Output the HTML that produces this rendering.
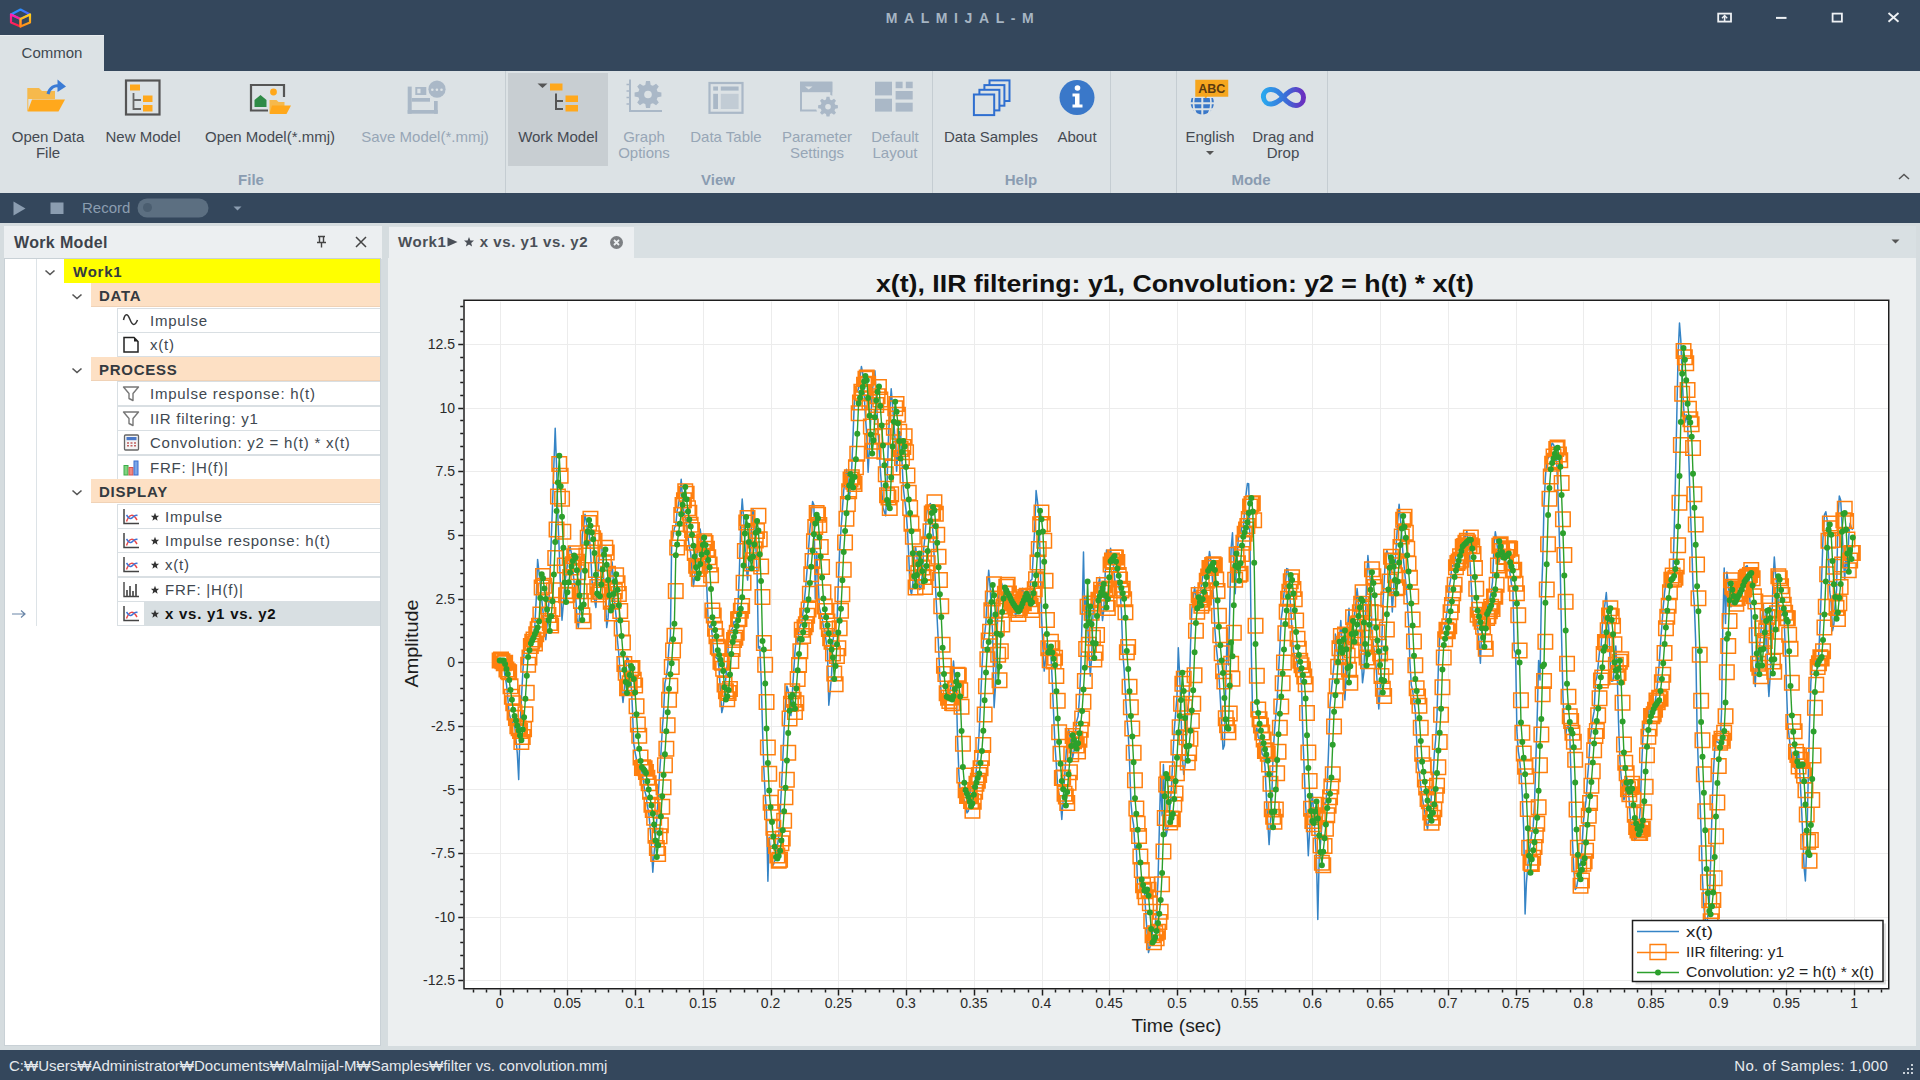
<!DOCTYPE html>
<html><head><meta charset="utf-8">
<style>
*{margin:0;padding:0;box-sizing:border-box}
html,body{width:1920px;height:1080px;overflow:hidden;background:#34475c;font-family:"Liberation Sans",sans-serif;}
.a{position:absolute}
#ttl{left:0;width:1920px;top:10px;text-align:center;color:#a6b5c3;font-weight:bold;font-size:14px;letter-spacing:6.6px;text-indent:6px;line-height:16px}
#ctab{left:0;top:35px;width:104px;height:36px;background:#dce2e5;border-top:1px solid #e9edef;color:#404850;font-size:15px;text-align:center;line-height:34px}
#ribbon{left:0;top:71px;width:1920px;height:122px;background:#dce2e5}
.lb{position:absolute;top:129px;font-size:15px;line-height:16px;color:#454a52;text-align:center;white-space:nowrap}
.dis{color:#97a6b6}
.grp{position:absolute;top:172px;font-size:15px;font-weight:bold;color:#8a9cb1;text-align:center;line-height:16px}
.sep{position:absolute;top:71px;width:1px;height:122px;background:#c5cdd2}
#lpanel{left:0;top:223px;width:387px;height:827px;background:#d5dcdf}
#lhead{left:4px;top:226px;width:378px;height:33px;background:#eceff1}
#tree{left:4px;top:258px;width:377px;height:788px;background:#fff;border:1px solid #c9d1d6}
.row{position:absolute;height:25px;font-size:15px;line-height:26px;color:#404850;white-space:nowrap;letter-spacing:0.75px}
.cell{position:absolute;left:117px;width:263px;height:25px;border:1px solid #d9dfe3;border-right:none;background:#fff}
.ic{position:absolute}
#rpanel{left:387px;top:223px;width:1533px;height:827px;background:#d5dcdf}
#tabstrip{left:389px;top:226px;width:1527px;height:33px;background:#d9e0e3}
#doctab{left:389px;top:227px;width:245px;height:32px;background:#eceff1}
#content{left:388px;top:258px;width:1528px;height:788px;background:#eceff0}
#status{left:0;top:1050px;width:1920px;height:30px;background:#34475c;color:#e6eaee;font-size:15px;line-height:32px}
</style></head><body>
<!-- title bar -->
<svg class="a" style="left:8px;top:6px" width="26" height="24" viewBox="0 0 26 24">
<defs><linearGradient id="cg1" x1="0" y1="0" x2="1" y2="1"><stop offset="0" stop-color="#1aa6ff"/><stop offset="1" stop-color="#6a3cff"/></linearGradient>
<linearGradient id="cg2" x1="0" y1="0" x2="0" y2="1"><stop offset="0" stop-color="#ff1fb4"/><stop offset="1" stop-color="#ff2040"/></linearGradient>
<linearGradient id="cg3" x1="0" y1="0" x2="0" y2="1"><stop offset="0" stop-color="#ffd21a"/><stop offset="1" stop-color="#ff8a1a"/></linearGradient></defs>
<path d="M3 8.5L12.5 3.5L22 8.5L12.5 13Z" fill="none" stroke="url(#cg1)" stroke-width="2.2" stroke-linejoin="round"/>
<path d="M3 8.5V16.5L12.5 20.5V13Z" fill="none" stroke="url(#cg2)" stroke-width="2.2" stroke-linejoin="round"/>
<path d="M22 8.5V16.5L12.5 20.5V13Z" fill="none" stroke="url(#cg3)" stroke-width="2.2" stroke-linejoin="round"/>
</svg>
<div id="ttl" class="a">MALMIJAL-M</div>
<svg class="a" style="left:1700px;top:0" width="220" height="35" viewBox="1700 0 220 35" fill="none" stroke="#eef1f4" stroke-width="1.8">
<rect x="1718.2" y="13.6" width="12.8" height="8"/><path d="M1724.6 21V16.2" stroke-width="1.6"/><path d="M1722 18.2L1724.6 15.6L1727.2 18.2" stroke-width="1.4"/>
<path d="M1776 17.9H1786.5" stroke-width="2"/>
<rect x="1832.6" y="13.6" width="9.3" height="8"/>
<path d="M1888.5 13L1898.5 21.8M1898.5 13L1888.5 21.8" stroke-width="1.9"/>
</svg>
<div id="ctab" class="a">Common</div>
<!-- ribbon -->
<div id="ribbon" class="a"></div>
<div class="a" style="left:508px;top:73px;width:100px;height:93px;background:#c8ced2"></div>
<div class="sep" style="left:505px"></div>
<div class="sep" style="left:932px"></div>
<div class="sep" style="left:1110px"></div>
<div class="sep" style="left:1176px"></div>
<div class="sep" style="left:1327px"></div>
<!-- ribbon icons -->
<svg class="a" style="left:0;top:71px" width="1340" height="122" viewBox="0 71 1340 122">
<!-- open data file -->
<path d="M28 88h11l3 3h13v8H28z" fill="#f6b94c"/>
<path d="M32 99.5H65L58.5 111.5H27.5z" fill="#ffa81c"/>
<path d="M27.8 88v23" stroke="#f6b94c" stroke-width="1"/>
<path d="M48 94C50 87 55 85 59 86" fill="none" stroke="#3a7bd5" stroke-width="3.2"/>
<path d="M57.5 79.5L66 86.5L57.5 92z" fill="#3a7bd5"/>
<!-- new model -->
<rect x="126" y="80.5" width="33.5" height="34" fill="none" stroke="#555" stroke-width="2.2"/>
<rect x="130" y="84.5" width="10" height="6" fill="#ffa81c"/>
<path d="M133.5 93v16H141M133.5 100H141" fill="none" stroke="#666" stroke-width="1.8"/>
<rect x="143" y="95.5" width="9.5" height="6.5" fill="#ffa81c"/>
<rect x="143" y="105" width="9.5" height="6.5" fill="#ffa81c"/>
<!-- open model -->
<path d="M268 110.5H251V85H284V97" fill="none" stroke="#555" stroke-width="2.2"/>
<path d="M254.5 107V100L260.5 95L266.5 100V107z" fill="#2e8b46"/>
<circle cx="273.5" cy="92" r="3.4" fill="#ffa81c"/>
<path d="M269.5 100h7l2 2h6v11h-15z" fill="#f6b94c"/>
<path d="M272 105.5H291L286.5 114H269.5z" fill="#ffa81c"/>
<!-- save model disabled -->
<g fill="#aab8c7">
<rect x="407.7" y="86.6" width="4" height="27.1"/>
<rect x="407.7" y="110" width="30" height="3.7"/>
<rect x="434" y="101" width="3.7" height="12.7"/>
<rect x="411.7" y="98" width="18.3" height="3.7"/>
<path d="M415.3 87h11v8h-11zM417.3 88.7v4.6h3.2v-4.6z" fill-rule="evenodd"/>
</g>
<circle cx="437" cy="89.2" r="9.8" fill="#dce2e5"/>
<circle cx="437" cy="89.2" r="8.6" fill="#aab8c7"/>
<circle cx="432.3" cy="89.7" r="1.3" fill="#dce2e5"/><circle cx="436.9" cy="89.7" r="1.3" fill="#dce2e5"/><circle cx="441.5" cy="89.7" r="1.3" fill="#dce2e5"/>
<!-- work model -->
<path d="M537.5 83.5H547.5L542.5 88z" fill="#555"/>
<rect x="550" y="83.5" width="12.5" height="7" fill="#ffa81c"/>
<path d="M556 93.5v15.5H563M556 101H563" fill="none" stroke="#555" stroke-width="2"/>
<rect x="565.5" y="95.5" width="12.5" height="6.5" fill="#ffa81c"/>
<rect x="565.5" y="105" width="12.5" height="6.5" fill="#ffa81c"/>
<!-- graph options -->
<path d="M630 79.5v31.6h32" fill="none" stroke="#aab8c7" stroke-width="2"/>
<path d="M626.5 84.5h3.5M626.5 91h3.5M626.5 97.5h3.5M626.5 104h3.5" stroke="#aab8c7" stroke-width="1.6"/>
<path d="M657.6 91.8L661.4 92.5L661.4 96.5L657.6 97.2L656.7 99.4L658.8 102.6L656.1 105.3L652.9 103.2L650.7 104.1L650.0 107.9L646.0 107.9L645.3 104.1L643.1 103.2L639.9 105.3L637.2 102.6L639.3 99.4L638.4 97.2L634.6 96.5L634.6 92.5L638.4 91.8L639.3 89.6L637.2 86.4L639.9 83.7L643.1 85.8L645.3 84.9L646.0 81.1L650.0 81.1L650.7 84.9L652.9 85.8L656.1 83.7L658.8 86.4L656.7 89.6z" fill="#aab8c7"/>
<circle cx="648" cy="94.5" r="3.8" fill="#dce2e5"/>
<!-- data table -->
<rect x="709.5" y="83" width="33" height="29.8" fill="none" stroke="#aab8c7" stroke-width="2.2"/>
<rect x="713.2" y="86.5" width="4.8" height="4.1" fill="#aab8c7"/>
<rect x="720.8" y="86.5" width="17.8" height="4.1" fill="#aab8c7"/>
<rect x="713.2" y="93.8" width="4.8" height="15.2" fill="#aab8c7"/>
<rect x="720.8" y="93.8" width="17.8" height="15.2" fill="#c2ccd5"/>
<!-- parameter settings -->
<path d="M819 110.6H801V82.7H831.3V97" fill="none" stroke="#aab8c7" stroke-width="2"/>
<rect x="800" y="81.7" width="32.3" height="10.5" fill="#aab8c7"/>
<path d="M805 86.5h7.5l-3.75 3z" fill="#dce2e5"/>
<circle cx="828" cy="106.7" r="12" fill="#dce2e5"/>
<path d="M835.2 104.7L837.9 105.2L837.9 108.2L835.2 108.7L834.5 110.4L836.0 112.7L834.0 114.7L831.7 113.2L830.0 113.9L829.5 116.6L826.5 116.6L826.0 113.9L824.3 113.2L822.0 114.7L820.0 112.7L821.5 110.4L820.8 108.7L818.1 108.2L818.1 105.2L820.8 104.7L821.5 103.0L820.0 100.7L822.0 98.7L824.3 100.2L826.0 99.5L826.5 96.8L829.5 96.8L830.0 99.5L831.7 100.2L834.0 98.7L836.0 100.7L834.5 103.0z" fill="#aab8c7"/>
<circle cx="828" cy="106.7" r="2.8" fill="#dce2e5"/>
<!-- default layout -->
<rect x="875" y="81.7" width="17" height="13.7" fill="#aab8c7"/>
<rect x="875" y="98.7" width="17" height="12.9" fill="#aab8c7"/>
<rect x="895.6" y="81.7" width="7" height="6.5" fill="#aab8c7"/>
<rect x="905.8" y="81.7" width="6.9" height="6.5" fill="#aab8c7"/>
<rect x="895.6" y="91" width="17.1" height="8.5" fill="#aab8c7"/>
<rect x="895.6" y="102.7" width="17.1" height="8.9" fill="#aab8c7"/>
<!-- data samples -->
<g fill="#dce2e5" stroke="#2f6fd0" stroke-width="2">
<rect x="989.5" y="80.4" width="20" height="20.6"/>
<rect x="984.4" y="85.1" width="20" height="20.6"/>
<rect x="979.4" y="89.8" width="20" height="20.6"/>
<rect x="973.9" y="94.5" width="20.3" height="20.6"/>
</g>
<!-- about -->
<circle cx="1077" cy="97.5" r="17.5" fill="#3a78c9"/>
<circle cx="1077.5" cy="88" r="2.8" fill="#fff"/>
<path d="M1072.5 93.5h7v11h3v3h-10v-3h2.5v-8h-2.5z" fill="#fff"/>
<!-- english -->
<path d="M1194.5 79h34.5v18.5h-21.5l-3.5 5v-5h-9.5z" fill="#f6a61e" stroke="#dce2e5" stroke-width="1.5"/>
<text x="1211.7" y="93" font-family="Liberation Sans" font-weight="bold" font-size="12.5" fill="#5a3a10" text-anchor="middle">ABC</text>
<clipPath id="glc"><rect x="1188" y="98" width="30" height="20"/></clipPath>
<g clip-path="url(#glc)"><circle cx="1202.3" cy="102.8" r="11.6" fill="#3a78c9"/>
<path d="M1189 103.3h27M1189 109.3h27M1202.3 96v20" stroke="#dce2e5" stroke-width="2"/>
<path d="M1196.5 92c-4 6-4 16 0 23M1208 92c4 6 4 16 0 23" fill="none" stroke="#dce2e5" stroke-width="1.6"/></g>
<!-- drag and drop -->
<defs><linearGradient id="inf" x1="0" x2="1"><stop offset="0" stop-color="#2aa7ee"/><stop offset="0.55" stop-color="#3a6fd8"/><stop offset="1" stop-color="#6a2fc0"/></linearGradient></defs>
<path d="M1283 97.5C1279 91 1275 89 1270 89.5C1265 90 1263 94 1263.5 97.5C1264 101.5 1267 104.5 1271.5 104C1276 103.5 1279 101 1283 97.5C1287 93 1291 89 1296 89.5C1301 90 1303.5 94 1303.5 97.5C1303.5 102 1300.5 105.5 1296 105.5C1291 105.5 1287 102 1283 97.5z" fill="none" stroke="url(#inf)" stroke-width="5"/>
</svg>
<!-- ribbon labels -->
<div class="lb" style="left:8px;width:80px">Open Data<br>File</div>
<div class="lb" style="left:100px;width:86px">New Model</div>
<div class="lb" style="left:195px;width:150px">Open Model(*.mmj)</div>
<div class="lb dis" style="left:350px;width:150px">Save Model(*.mmj)</div>
<div class="lb" style="left:510px;width:96px">Work Model</div>
<div class="lb dis" style="left:610px;width:68px">Graph<br>Options</div>
<div class="lb dis" style="left:684px;width:84px">Data Table</div>
<div class="lb dis" style="left:774px;width:86px">Parameter<br>Settings</div>
<div class="lb dis" style="left:862px;width:66px">Default<br>Layout</div>
<div class="lb" style="left:940px;width:102px">Data Samples</div>
<div class="lb" style="left:1047px;width:60px">About</div>
<div class="lb" style="left:1180px;width:60px">English</div>
<svg class="a" style="left:1205px;top:150px" width="10" height="6"><path d="M1 1h8l-4 4z" fill="#555"/></svg>
<div class="lb" style="left:1244px;width:78px">Drag and<br>Drop</div>
<div class="grp" style="left:211px;width:80px">File</div>
<div class="grp" style="left:678px;width:80px">View</div>
<div class="grp" style="left:981px;width:80px">Help</div>
<div class="grp" style="left:1211px;width:80px">Mode</div>
<svg class="a" style="left:1897px;top:172px" width="14" height="10"><path d="M2 7L7 2.5L12 7" fill="none" stroke="#555" stroke-width="1.5"/></svg>
<!-- toolbar -->
<svg class="a" style="left:0;top:193px" width="260" height="30" viewBox="0 193 260 30">
<path d="M13.5 201.5L25.5 208.5L13.5 215.5z" fill="#8b9db0"/>
<rect x="50.5" y="202.5" width="13" height="11.5" fill="#8b9db0"/>
<rect x="137.5" y="198.5" width="71" height="19" rx="9.5" fill="#5c6f81"/>
<circle cx="147.5" cy="207.5" r="4.5" fill="#4b5e70"/>
<path d="M233.5 206.5h8l-4 4z" fill="#8b9db0"/>
</svg>
<div class="a" style="left:82px;top:199px;font-size:15px;line-height:18px;color:#8b9db0">Record</div>
<!-- left panel -->
<div id="lpanel" class="a"></div>
<div id="lhead" class="a"></div>
<div class="a" style="left:14px;top:234px;font-size:16px;font-weight:bold;color:#3d434b;line-height:18px;letter-spacing:0.35px">Work Model</div>
<svg class="a" style="left:310px;top:230px" width="64" height="24" viewBox="310 230 64 24">
<path d="M318 236.5h7M319.5 236.5v6M323.5 236.5v6M317 242.5h9M321.5 242.5v5" fill="none" stroke="#444" stroke-width="1.4"/>
<path d="M356 237l10 10M366 237l-10 10" stroke="#444" stroke-width="1.5"/>
</svg>
<div id="tree" class="a"></div>
<div class="a" style="left:36px;top:259px;width:1px;height:367px;background:#dde3e7"></div>
<div class="a" style="left:64px;top:259px;width:316px;height:24px;background:#ffff00"></div>
<svg class="a" style="left:44px;top:269px" width="12" height="7"><path d="M1.5 1.5L6 5.5L10.5 1.5" fill="none" stroke="#555" stroke-width="1.6"/></svg>
<div class="row" style="left:73px;top:259px;font-weight:bold;color:#343a40">Work1</div>
<div class="a" style="left:91px;top:283px;width:289px;height:24px;background:#fde0c4;border-bottom:1px solid #f0d2b6"></div>
<svg class="a" style="left:71px;top:293px" width="12" height="7"><path d="M1.5 1.5L6 5.5L10.5 1.5" fill="none" stroke="#555" stroke-width="1.6"/></svg>
<div class="row" style="left:99px;top:283px;font-weight:bold;color:#343a40">DATA</div>
<div class="cell" style="top:308px"></div>
<svg class="ic" style="left:121px;top:311px" width="20" height="19" viewBox="0 0 19 19"><path d="M2 9C3.5 2 6 2 8.5 8.5S13.5 15 16 9" fill="none" stroke="#333" stroke-width="1.5"/></svg>
<div class="row" style="left:150px;top:308px;">Impulse</div>
<div class="cell" style="top:332px"></div>
<svg class="ic" style="left:121px;top:335px" width="20" height="19" viewBox="0 0 19 19"><path d="M2.5 2.5h10l4 4v10.5h-14z" fill="none" stroke="#222" stroke-width="1.5"/><path d="M12.5 2.5l4 4h-4z" fill="#222"/></svg>
<div class="row" style="left:150px;top:332px;">x(t)</div>
<div class="a" style="left:91px;top:357px;width:289px;height:24px;background:#fde0c4;border-bottom:1px solid #f0d2b6"></div>
<svg class="a" style="left:71px;top:367px" width="12" height="7"><path d="M1.5 1.5L6 5.5L10.5 1.5" fill="none" stroke="#555" stroke-width="1.6"/></svg>
<div class="row" style="left:99px;top:357px;font-weight:bold;color:#343a40">PROCESS</div>
<div class="cell" style="top:381px"></div>
<svg class="ic" style="left:121px;top:384px" width="20" height="19" viewBox="0 0 19 19"><path d="M2 3h15l-5.5 6.5v7l-4-2v-5z" fill="none" stroke="#777" stroke-width="1.4" stroke-linejoin="round"/></svg>
<div class="row" style="left:150px;top:381px;">Impulse response: h(t)</div>
<div class="cell" style="top:406px"></div>
<svg class="ic" style="left:121px;top:409px" width="20" height="19" viewBox="0 0 19 19"><path d="M2 3h15l-5.5 6.5v7l-4-2v-5z" fill="none" stroke="#777" stroke-width="1.4" stroke-linejoin="round"/></svg>
<div class="row" style="left:150px;top:406px;">IIR filtering: y1</div>
<div class="cell" style="top:430px"></div>
<svg class="ic" style="left:121px;top:433px" width="20" height="19" viewBox="0 0 19 19"><rect x="3" y="2" width="14" height="15" rx="1" fill="#f4f4f4" stroke="#666" stroke-width="1.3"/><rect x="5" y="4" width="10" height="3.2" fill="#4a78c8"/><path d="M5.5 10h2M9 10h2M12.5 10h2M5.5 12.8h2M9 12.8h2M12.5 12.8h2" stroke="#c06060" stroke-width="1.4"/></svg>
<div class="row" style="left:150px;top:430px;">Convolution: y2 = h(t) * x(t)</div>
<div class="cell" style="top:455px"></div>
<svg class="ic" style="left:121px;top:458px" width="20" height="19" viewBox="0 0 19 19"><rect x="2.5" y="7.5" width="4" height="9.5" fill="#7fd27f" stroke="#3cae4a"/><rect x="7.5" y="9.5" width="4" height="7.5" fill="#f08a80" stroke="#d9534f"/><rect x="12.5" y="3" width="4" height="14" fill="#7aa6e8" stroke="#3a6fd0"/></svg>
<div class="row" style="left:150px;top:455px;">FRF: |H(f)|</div>
<div class="a" style="left:91px;top:479px;width:289px;height:24px;background:#fde0c4;border-bottom:1px solid #f0d2b6"></div>
<svg class="a" style="left:71px;top:489px" width="12" height="7"><path d="M1.5 1.5L6 5.5L10.5 1.5" fill="none" stroke="#555" stroke-width="1.6"/></svg>
<div class="row" style="left:99px;top:479px;font-weight:bold;color:#343a40">DISPLAY</div>
<div class="cell" style="top:504px"></div>
<svg class="ic" style="left:121px;top:507px" width="20" height="19" viewBox="0 0 19 19"><path d="M2.5 2v14.5h15" fill="none" stroke="#444" stroke-width="1.5"/><path d="M5 14.5Q9.5 3 15.5 13" fill="none" stroke="#ec4a4a" stroke-width="1.5"/><path d="M5 8Q8.5 13.5 11 10.5T16 8.5" fill="none" stroke="#3f74d6" stroke-width="1.5"/></svg>
<div class="row" style="left:150px;top:504px;"><svg width="10" height="10" viewBox="0 0 12 12" style="position:relative;top:0px;margin-right:5px"><path d="M6 1L7.4 4.4L11 4.6L8.2 6.9L9.1 10.5L6 8.5L2.9 10.5L3.8 6.9L1 4.6L4.6 4.4z" fill="#333"/></svg>Impulse</div>
<div class="cell" style="top:528px"></div>
<svg class="ic" style="left:121px;top:531px" width="20" height="19" viewBox="0 0 19 19"><path d="M2.5 2v14.5h15" fill="none" stroke="#444" stroke-width="1.5"/><path d="M5 14.5Q9.5 3 15.5 13" fill="none" stroke="#ec4a4a" stroke-width="1.5"/><path d="M5 8Q8.5 13.5 11 10.5T16 8.5" fill="none" stroke="#3f74d6" stroke-width="1.5"/></svg>
<div class="row" style="left:150px;top:528px;"><svg width="10" height="10" viewBox="0 0 12 12" style="position:relative;top:0px;margin-right:5px"><path d="M6 1L7.4 4.4L11 4.6L8.2 6.9L9.1 10.5L6 8.5L2.9 10.5L3.8 6.9L1 4.6L4.6 4.4z" fill="#333"/></svg>Impulse response: h(t)</div>
<div class="cell" style="top:552px"></div>
<svg class="ic" style="left:121px;top:555px" width="20" height="19" viewBox="0 0 19 19"><path d="M2.5 2v14.5h15" fill="none" stroke="#444" stroke-width="1.5"/><path d="M5 14.5Q9.5 3 15.5 13" fill="none" stroke="#ec4a4a" stroke-width="1.5"/><path d="M5 8Q8.5 13.5 11 10.5T16 8.5" fill="none" stroke="#3f74d6" stroke-width="1.5"/></svg>
<div class="row" style="left:150px;top:552px;"><svg width="10" height="10" viewBox="0 0 12 12" style="position:relative;top:0px;margin-right:5px"><path d="M6 1L7.4 4.4L11 4.6L8.2 6.9L9.1 10.5L6 8.5L2.9 10.5L3.8 6.9L1 4.6L4.6 4.4z" fill="#333"/></svg>x(t)</div>
<div class="cell" style="top:577px"></div>
<svg class="ic" style="left:121px;top:580px" width="20" height="19" viewBox="0 0 19 19"><path d="M2.5 2v14.5h15" fill="none" stroke="#444" stroke-width="1.4"/><path d="M5.5 16V10M8.5 16V6M11.5 16V11M14.5 16V4" stroke="#555" stroke-width="1.8"/></svg>
<div class="row" style="left:150px;top:577px;"><svg width="10" height="10" viewBox="0 0 12 12" style="position:relative;top:0px;margin-right:5px"><path d="M6 1L7.4 4.4L11 4.6L8.2 6.9L9.1 10.5L6 8.5L2.9 10.5L3.8 6.9L1 4.6L4.6 4.4z" fill="#333"/></svg>FRF: |H(f)|</div>
<div class="cell" style="top:601px"></div>
<div class="a" style="left:144px;top:602px;width:236px;height:24px;background:#d8dfe2"></div>
<svg class="ic" style="left:121px;top:604px" width="20" height="19" viewBox="0 0 19 19"><path d="M2.5 2v14.5h15" fill="none" stroke="#444" stroke-width="1.5"/><path d="M5 14.5Q9.5 3 15.5 13" fill="none" stroke="#ec4a4a" stroke-width="1.5"/><path d="M5 8Q8.5 13.5 11 10.5T16 8.5" fill="none" stroke="#3f74d6" stroke-width="1.5"/></svg>
<div class="row" style="left:150px;top:601px;font-weight:bold;color:#111"><svg width="10" height="10" viewBox="0 0 12 12" style="position:relative;top:0px;margin-right:5px"><path d="M6 1L7.4 4.4L11 4.6L8.2 6.9L9.1 10.5L6 8.5L2.9 10.5L3.8 6.9L1 4.6L4.6 4.4z" fill="#333"/></svg>x vs. y1 vs. y2</div>
<svg class="a" style="left:11px;top:608px" width="16" height="12"><path d="M1 6h13M10 2.5L14 6L10 9.5" fill="none" stroke="#6a86a8" stroke-width="1.2"/></svg>
<!-- right panel -->
<div id="rpanel" class="a"></div>
<div id="tabstrip" class="a"></div>
<div id="doctab" class="a"></div>
<div id="content" class="a"></div>
<div class="a" style="left:398px;top:233px;font-size:15px;font-weight:bold;color:#4a4f57;line-height:18px;white-space:nowrap;letter-spacing:0.55px">Work1<svg width="11" height="10" viewBox="0 0 11 10" style="position:relative;top:0px;margin-left:1px"><path d="M0.5 0.5L10.5 5L0.5 9.5z" fill="#4a4f57"/></svg> <svg width="12" height="12" viewBox="0 0 12 12" style="position:relative;top:1px"><path d="M6 1L7.4 4.4L11 4.6L8.2 6.9L9.1 10.5L6 8.5L2.9 10.5L3.8 6.9L1 4.6L4.6 4.4z" fill="#4a4f57"/></svg> x vs. y1 vs. y2</div>
<svg class="a" style="left:608px;top:234px" width="17" height="17" viewBox="0 0 17 17"><circle cx="8.5" cy="8.5" r="6.5" fill="#7d8084"/><path d="M6 6l5 5M11 6l-5 5" stroke="#eceff1" stroke-width="1.8"/></svg>
<svg class="a" style="left:1891px;top:239px" width="9" height="6"><path d="M0.5 0.5h8l-4 4z" fill="#555"/></svg>
<svg class="a" style="left:0;top:0" width="1920" height="1080" viewBox="0 0 1920 1080">
<defs><clipPath id="pc"><rect x="464.25" y="300.5" width="1424.25" height="688.0"/></clipPath></defs>
<rect x="463.25" y="299.5" width="1426.25" height="690.0" fill="#fff"/>
<path d="M500.5 301.5V988.5M567.5 301.5V988.5M635.5 301.5V988.5M703.5 301.5V988.5M771.5 301.5V988.5M838.5 301.5V988.5M906.5 301.5V988.5M974.5 301.5V988.5M1042.5 301.5V988.5M1109.5 301.5V988.5M1177.5 301.5V988.5M1245.5 301.5V988.5M1312.5 301.5V988.5M1380.5 301.5V988.5M1448.5 301.5V988.5M1516.5 301.5V988.5M1583.5 301.5V988.5M1651.5 301.5V988.5M1719.5 301.5V988.5M1786.5 301.5V988.5M1854.5 301.5V988.5M465.25 980.5H1888.5M465.25 917.5H1888.5M465.25 853.5H1888.5M465.25 789.5H1888.5M465.25 726.5H1888.5M465.25 662.5H1888.5M465.25 599.5H1888.5M465.25 535.5H1888.5M465.25 471.5H1888.5M465.25 408.5H1888.5M465.25 344.5H1888.5" stroke="#ececec" stroke-width="1" fill="none"/>
<g clip-path="url(#pc)">
<polyline points="499.7,657.6 501.1,661.4 502.4,668.8 503.8,667.2 505.1,676.9 506.5,684.6 507.8,698 509.2,713.5 510.5,718.5 511.9,720.3 513.2,725.7 514.6,724 516,740 517.3,753.2 518.7,779.6 520,728.3 521.4,699.5 522.7,674.2 524.1,652.3 525.4,646.8 526.8,640.1 528.1,643.5 529.5,641.6 530.9,637.1 532.2,638.1 533.6,635.6 534.9,624.4 536.3,597.9 537.6,559.4 539,572.1 540.3,584 541.7,599.1 543,611.5 544.4,624.8 545.8,639.7 547.1,625 548.5,609.8 549.8,581.9 551.2,541.3 552.5,505.5 553.9,465.3 555.2,428.2 556.6,467.7 557.9,517.4 559.3,552.4 560.7,593.3 562,620.3 563.4,602.1 564.7,584.3 566.1,573.8 567.4,564.4 568.8,551.8 570.1,546.7 571.5,553.6 572.8,569.4 574.2,583.1 575.6,595.3 576.9,617.9 578.3,627.9 579.6,614.9 581,568.4 582.3,534.9 583.7,525.8 585,514.2 586.4,522.5 587.7,534.4 589.1,532.4 590.5,551.2 591.8,576.4 593.2,598.1 594.5,599.6 595.9,607.5 597.2,585.9 598.6,564.3 599.9,547.3 601.3,540.1 602.6,559.5 604,584 605.4,596.7 606.7,627.6 608.1,617.9 609.4,595.4 610.8,574.9 612.1,561.9 613.5,583.3 614.8,603.8 616.2,617.4 617.5,641.2 618.9,655 620.3,675.6 621.6,688 623,702.5 624.3,690.2 625.7,674.8 627,656.3 628.4,659.4 629.7,674.7 631.1,682.9 632.4,708.4 633.8,743.8 635.1,752.3 636.5,759.4 637.9,768.4 639.2,769.1 640.6,769.8 641.9,771.7 643.3,780.4 644.6,790.4 646,795.4 647.3,805.6 648.7,812.4 650,826.3 651.4,845.8 652.8,872.3 654.1,853.9 655.5,835.8 656.8,818.6 658.2,796.6 659.5,774.6 660.9,754.5 662.2,730.5 663.6,712 664.9,683.5 666.3,676.1 667.7,666.6 669,645.9 670.4,636 671.7,541 673.1,536.4 674.4,528 675.8,525.1 677.1,511 678.5,504.7 679.8,495.6 681.2,479.3 682.6,500.5 683.9,512 685.3,517.9 686.6,524 688,536.8 689.3,546.9 690.7,553 692,570.6 693.4,586.6 694.7,576.7 696.1,560 697.5,550 698.8,540.3 700.2,529.1 701.5,539.7 702.9,551.7 704.2,558.7 705.6,560.6 706.9,590.1 708.3,625.1 709.6,627.4 711,624.6 712.4,637 713.7,653 715.1,656.7 716.4,658.1 717.8,658.9 719.1,669.5 720.5,692.8 721.8,712.6 723.2,706.5 724.5,695.6 725.9,676.6 727.3,663.9 728.6,638.3 730,634.7 731.3,630.2 732.7,627.8 734,621.5 735.4,622.2 736.7,619.3 738.1,602.8 739.4,570.6 740.8,522.3 742.2,499.1 743.5,515.9 744.9,543.6 746.2,566.7 747.6,580.1 748.9,562.3 750.3,549.4 751.6,527 753,509.4 754.3,516.8 755.7,543.4 757.1,572.2 758.4,648 759.8,646.6 761.1,677.2 762.5,728.2 763.8,767.8 765.2,794.8 766.5,812.1 767.9,881.3 769.2,837.3 770.6,853.6 772,861.9 773.3,865 774.7,860.9 776,859.1 777.4,846.6 778.7,836.2 780.1,814.2 781.4,788.4 782.8,760.3 784.1,728.2 785.5,703.8 786.9,685.9 788.2,690.1 789.6,707.6 790.9,715.6 792.3,693.2 793.6,673.1 795,651.7 796.3,636.5 797.7,642.6 799,629.5 800.4,625.2 801.8,622.7 803.1,611.5 804.5,599.3 805.8,585.4 807.2,568.3 808.5,549.8 809.9,529.4 811.2,515.7 812.6,501.5 813.9,504.7 815.3,599 816.7,551.7 818,578 819.4,607.7 820.7,613.2 822.1,617.9 823.4,626.5 824.8,631 826.1,641.2 827.5,651.3 828.8,705.2 830.2,691.6 831.6,674.4 832.9,641.8 834.3,629.4 835.6,623 837,622.2 838.3,583.9 839.7,549.9 841,529.3 842.4,509.6 843.7,490.6 845.1,481 846.5,469.2 847.8,475.9 849.2,497.7 850.5,489.6 851.9,464.6 853.2,431.5 854.6,395 855.9,390.3 857.3,391.6 858.6,388.5 860,377.8 861.4,366.5 862.7,373.2 864.1,392.8 865.4,416.8 866.8,435.5 868.1,472.3 869.5,446.8 870.8,417.1 872.2,393.6 873.5,380 874.9,370.8 876.3,396.6 877.6,422.7 879,447.3 880.3,468.7 881.7,488.8 883,507.7 884.4,511.8 885.7,515.7 887.1,481.4 888.4,438.9 889.8,410.6 891.2,388.8 892.5,405.2 893.9,423.3 895.2,441.3 896.6,471.3 897.9,451.4 899.3,431.4 900.6,432.5 902,461.6 903.3,487.5 904.7,499.9 906,510 907.4,528.8 908.8,557.5 910.1,588.3 911.5,594.6 912.8,583.8 914.2,560.6 915.5,546.4 916.9,556.4 918.2,570.9 919.6,589.6 920.9,588.1 922.3,574.1 923.7,548.8 925,535.9 926.4,515.2 927.7,506.8 929.1,505.1 930.4,503.5 931.8,519.5 933.1,533.7 934.5,563.7 935.8,592.7 937.2,619.7 938.6,648 939.9,677.8 941.3,693.1 942.6,703.5 944,704 945.3,697 946.7,693.2 948,700.4 949.4,695.7 950.7,687.4 952.1,680.2 953.5,661.1 954.8,678.9 956.2,685.7 957.5,737.1 958.9,774.3 960.2,791.2 961.6,794.6 962.9,796.9 964.3,800.6 965.6,803.3 967,812.9 968.4,811 969.7,798.7 971.1,786.8 972.4,786.7 973.8,782.6 975.1,781.3 976.5,767.6 977.8,756.8 979.2,731.5 980.5,703.6 981.9,669.4 983.3,641.3 984.6,635.5 986,621 987.3,590 988.7,570.2 990,585 991.4,611.6 992.7,634.5 994.1,707.6 995.4,687.8 996.8,639.9 998.2,603.8 999.5,589.7 1000.9,581.3 1002.2,585.1 1003.6,590.3 1004.9,600.1 1006.3,599.2 1007.6,600.2 1009,605.2 1010.3,611.1 1011.7,608.6 1013.1,608.6 1014.4,609.7 1015.8,617.2 1017.1,600.7 1018.5,606.5 1019.8,597.3 1021.2,592.3 1022.5,588.2 1023.9,594.7 1025.2,604.2 1026.6,606.2 1028,608.9 1029.3,602.8 1030.7,580.5 1032,579.2 1033.4,551.1 1034.7,528.9 1036.1,490.5 1037.4,500.8 1038.8,513.5 1040.1,555.3 1041.5,616.3 1042.9,646.6 1044.2,671.1 1045.6,659.5 1046.9,643.5 1048.3,651.3 1049.6,653.6 1051,655.8 1052.3,682.3 1053.7,715.8 1055,745.6 1056.4,765.6 1057.8,788.6 1059.1,794.3 1060.5,801.2 1061.8,819.5 1063.2,799.1 1064.5,778.4 1065.9,757.3 1067.2,736.3 1068.6,729.2 1069.9,736.1 1071.3,748.1 1072.7,757.5 1074,751.1 1075.4,732.8 1076.7,721.1 1078.1,716.3 1079.4,698.5 1080.8,670 1082.1,617 1083.5,552 1084.8,620.2 1086.2,596.9 1087.6,622 1088.9,651.3 1090.3,676.1 1091.6,657.7 1093,614.1 1094.3,596.8 1095.7,593 1097,592.6 1098.4,584.3 1099.7,577.2 1101.1,600.8 1102.5,620.6 1103.8,609.8 1105.2,574 1106.5,550 1107.9,553 1109.2,555.6 1110.6,548.3 1111.9,562.7 1113.3,564 1114.6,577.9 1116,590.3 1117.4,580.4 1118.7,585.1 1120.1,592.8 1121.4,610.5 1122.8,653.2 1124.1,669.1 1125.5,694.7 1126.8,716.9 1128.2,732.9 1129.5,760.8 1130.9,802 1132.3,817.4 1133.6,825 1135,848.3 1136.3,845.9 1137.7,890.1 1139,892.1 1140.4,890.1 1141.7,892.7 1143.1,883 1144.4,889.2 1145.8,914 1147.2,934.4 1148.5,952.6 1149.9,947.3 1151.2,938.8 1152.6,931.8 1153.9,927.8 1155.3,922.7 1156.6,909.5 1158,880.8 1159.3,829.5 1160.7,774.9 1162.1,815.7 1163.4,764.5 1164.8,803.2 1166.1,835.8 1167.5,829.1 1168.8,824.6 1170.2,805.3 1171.5,786.4 1172.9,756.3 1174.2,730.8 1175.6,713.6 1177,696 1178.3,647.7 1179.7,676.4 1181,712.8 1182.4,757 1183.7,774.4 1185.1,765 1186.4,735.2 1187.8,708.3 1189.1,698.8 1190.5,645.5 1191.8,609.3 1193.2,597.7 1194.6,587.1 1195.9,596.8 1197.3,611.1 1198.6,601.3 1200,595.1 1201.3,585.6 1202.7,577 1204,568.9 1205.4,567.3 1206.7,564.5 1208.1,565.7 1209.5,551.4 1210.8,560.1 1212.2,576.1 1213.5,598 1214.9,629.2 1216.2,646.1 1217.6,659.4 1218.9,674.5 1220.3,698.6 1221.6,722.9 1223,749.3 1224.4,745.2 1225.7,687.3 1227.1,633.8 1228.4,665 1229.8,605.3 1231.1,548.8 1232.5,532.8 1233.8,566.8 1235.2,593.8 1236.5,567.8 1237.9,544 1239.3,528.7 1240.6,533.5 1242,526.5 1243.3,527.4 1244.7,509.8 1246,494.9 1247.4,483.6 1248.7,483.7 1250.1,550.3 1251.4,657 1252.8,723.8 1254.2,729.9 1255.5,732.3 1256.9,728.1 1258.2,737.2 1259.6,739.5 1260.9,748 1262.3,754.5 1263.6,755.8 1265,766.8 1266.3,795.3 1267.7,821 1269.1,844.6 1270.4,823.7 1271.8,797 1273.1,754 1274.5,731.2 1275.8,714.9 1277.2,699.7 1278.5,672.6 1279.9,646.5 1281.2,618.9 1282.6,608.8 1284,593.3 1285.3,585.3 1286.7,568.6 1288,569.1 1289.4,589.5 1290.7,607.6 1292.1,632.1 1293.4,650.2 1294.8,657.8 1296.1,656.9 1297.5,665.8 1298.9,671.9 1300.2,670.7 1301.6,687 1302.9,736.2 1304.3,772.7 1305.6,805.3 1307,824.7 1308.3,855.8 1309.7,829.9 1311,809.3 1312.4,793.8 1313.8,813.2 1315.1,836.4 1316.5,859.6 1317.8,919.4 1319.2,856.9 1320.5,843.5 1321.9,824.1 1323.2,801.8 1324.6,803.8 1325.9,802.7 1327.3,783.2 1328.7,746.4 1330,705.8 1331.4,690.8 1332.7,677.9 1334.1,663 1335.4,634 1336.8,648.3 1338.1,659.2 1339.5,637.5 1340.8,620.5 1342.2,645 1343.6,678.6 1344.9,699.9 1346.3,673.1 1347.6,627.3 1349,608.3 1350.3,641.8 1351.7,636.6 1353,628.6 1354.4,615.4 1355.7,605.8 1357.1,588.6 1358.5,603.7 1359.8,621.8 1361.2,652.1 1362.5,682.8 1363.9,671.8 1365.2,627.4 1366.6,580.2 1367.9,555.5 1369.3,572.5 1370.6,582.3 1372,633.4 1373.4,645.2 1374.7,653.1 1376.1,666.8 1377.4,686 1378.8,709 1380.1,690.7 1381.5,653.6 1382.8,606.6 1384.2,581.4 1385.5,555.9 1386.9,550.4 1388.3,554.9 1389.6,563.3 1391,585.2 1392.3,612 1393.7,588.2 1395,566 1396.4,542.8 1397.7,521.6 1399.1,504.2 1400.4,518.7 1401.8,536.5 1403.2,556.8 1404.5,570.4 1405.9,583.7 1407.2,600.5 1408.6,624.3 1409.9,661.7 1411.3,685.1 1412.6,690.1 1414,700.8 1415.3,711.2 1416.7,740.6 1418.1,767.8 1419.4,772.6 1420.8,786.6 1422.1,796.1 1423.5,805 1424.8,811.8 1426.2,822 1427.5,829.4 1428.9,817.4 1430.2,815.1 1431.6,791.1 1433,779.5 1434.3,754 1435.7,738.7 1437,715.2 1438.4,665.6 1439.7,636.5 1441.1,633 1442.4,630.8 1443.8,627.8 1445.1,624.9 1446.5,614.6 1447.8,604.7 1449.2,587.2 1450.6,579.3 1451.9,565.4 1453.3,566.1 1454.6,562.7 1456,554.8 1457.3,547.6 1458.7,543.7 1460,541.3 1461.4,542.8 1462.7,542.6 1464.1,536.5 1465.5,536.8 1466.8,530.8 1468.2,543.3 1469.5,551.7 1470.9,578.7 1472.2,602.8 1473.6,621.8 1474.9,621.7 1476.3,620.4 1477.6,628 1479,642.2 1480.4,663.3 1481.7,630.9 1483.1,607.9 1484.4,610.3 1485.8,608 1487.1,612.9 1488.5,599.8 1489.8,599.2 1491.2,592.1 1492.5,582 1493.9,547.9 1495.3,531.7 1496.6,539.9 1498,554.2 1499.3,561.8 1500.7,553.9 1502,558.4 1503.4,554.9 1504.7,550.7 1506.1,564.4 1507.4,562.6 1508.8,563.7 1510.2,575.1 1511.5,584.5 1512.9,588.4 1514.2,650.2 1515.6,653.2 1516.9,730.9 1518.3,751.1 1519.6,759.7 1521,773.5 1522.3,795.3 1523.7,829.9 1525.1,913.9 1526.4,883.2 1527.8,865 1529.1,853.8 1530.5,842.6 1531.8,833.1 1533.2,826.4 1534.5,803.4 1535.9,758.9 1537.2,717.5 1538.6,660.5 1540,680 1541.3,600 1542.7,562.4 1544,505.1 1545.4,477.4 1546.7,461.2 1548.1,458.1 1549.4,456.5 1550.8,448.9 1552.1,442.9 1553.5,444.4 1554.9,448.2 1556.2,452.1 1557.6,482.9 1558.9,521.9 1560.3,571.8 1561.6,638.2 1563,697.5 1564.3,723.7 1565.7,735.3 1567,727.2 1568.4,726 1569.8,734.8 1571.1,780.1 1572.5,841.2 1573.8,869.2 1575.2,889.4 1576.5,888 1577.9,879.3 1579.2,863.8 1580.6,865.9 1581.9,847.8 1583.3,822.8 1584.7,810.1 1586,801.2 1587.4,779.1 1588.7,763.9 1590.1,739.6 1591.4,730.4 1592.8,718.6 1594.1,711.4 1595.5,681.4 1596.8,677.8 1598.2,664.6 1599.6,650.7 1600.9,649.7 1602.3,626.7 1603.6,612.5 1605,603.8 1606.3,592.5 1607.7,612.3 1609,632.9 1610.4,667.9 1611.7,681.2 1613.1,680.7 1614.5,661 1615.8,645.9 1617.2,672.5 1618.5,721.9 1619.9,761 1621.2,777.3 1622.6,788.1 1623.9,800 1625.3,795.6 1626.6,776.6 1628,783.5 1629.4,804.1 1630.7,824.7 1632.1,824.6 1633.4,832 1634.8,840.4 1636.1,838.6 1637.5,834.3 1638.8,828.2 1640.2,810 1641.5,770 1642.9,737.8 1644.3,720.5 1645.6,712.9 1647,714.7 1648.3,714.5 1649.7,705.8 1651,704.2 1652.4,701.3 1653.7,704 1655.1,701.8 1656.4,693.2 1657.8,680.6 1659.2,664 1660.5,642.7 1661.9,625.5 1663.2,607.4 1664.6,592.5 1665.9,582.8 1667.3,572.5 1668.6,578.9 1670,577.5 1671.3,578.4 1672.7,580.7 1674.1,535.5 1675.4,481.1 1676.8,416 1678.1,354.3 1679.5,323.1 1680.8,339.7 1682.2,376.4 1683.5,406 1684.9,422.3 1686.2,414.7 1687.6,423.2 1689,463.5 1690.3,507.2 1691.7,543.4 1693,586 1694.4,605.9 1695.7,642.4 1697.1,730.8 1698.4,767.8 1699.8,794 1701.1,831.8 1702.5,879 1703.9,907 1705.2,919.8 1706.6,926 1707.9,915.6 1709.3,902.1 1710.6,864 1712,810.7 1713.3,774.4 1714.7,749.3 1716,741 1717.4,742 1718.8,742.8 1720.1,745 1721.5,713.1 1722.8,627.3 1724.2,568.1 1725.5,623.5 1726.9,572.1 1728.2,583.7 1729.6,597.7 1730.9,606.8 1732.3,604.1 1733.6,593.2 1735,591.6 1736.4,591.3 1737.7,589.9 1739.1,579.5 1740.4,580.1 1741.8,579.6 1743.1,577 1744.5,574 1745.8,566.7 1747.2,565.7 1748.5,573.4 1749.9,600.7 1751.3,611.3 1752.6,665.9 1754,671.1 1755.3,686.5 1756.7,646.5 1758,671 1759.4,648.8 1760.7,634.3 1762.1,617.4 1763.4,604.5 1764.8,648.9 1766.2,608.7 1767.5,672.5 1768.9,696.4 1770.2,676.1 1771.6,633.8 1772.9,584.1 1774.3,557 1775.6,574.8 1777,587.5 1778.3,602.5 1779.7,609.2 1781.1,615.7 1782.4,614.6 1783.8,611.4 1785.1,643.2 1786.5,688.1 1787.8,724.3 1789.2,737.1 1790.5,749 1791.9,760.1 1793.2,763.4 1794.6,768.2 1796,757.3 1797.3,758.1 1798.7,751.4 1800,776.7 1801.4,804.6 1802.7,834.4 1804.1,867.6 1805.4,881 1806.8,844.4 1808.1,784 1809.5,725 1810.9,681.6 1812.2,661.9 1813.6,661.1 1814.9,662.9 1816.3,660 1817.6,668.3 1819,649.3 1820.3,618.6 1821.7,577.5 1823,537.8 1824.4,514.9 1825.8,511.7 1827.1,519.5 1828.5,557.4 1829.8,591.7 1831.2,602.9 1832.5,630.8 1833.9,624.1 1835.2,603.1 1836.6,589.7 1837.9,520.4 1839.3,496.1 1840.7,500.1 1842,524.3 1843.4,559.7 1844.7,579.6 1846.1,551.6 1847.4,570.8 1848.8,536.2 1850.1,523.2 1851.5,528.4 1852.8,529.8" fill="none" stroke="#3584c6" stroke-width="1.5" stroke-linejoin="round"/>
<path d="M492.4 653.2h14.5v14.5h-14.5zM493.8 652.3h14.5v14.5h-14.5zM495.2 654.1h14.5v14.5h-14.5zM496.5 655.9h14.5v14.5h-14.5zM497.9 655.6h14.5v14.5h-14.5zM499.2 662.2h14.5v14.5h-14.5zM500.6 664h14.5v14.5h-14.5zM501.9 665h14.5v14.5h-14.5zM503.3 679.1h14.5v14.5h-14.5zM504.6 689.5h14.5v14.5h-14.5zM506 696h14.5v14.5h-14.5zM507.3 705.2h14.5v14.5h-14.5zM508.7 710.8h14.5v14.5h-14.5zM510.1 718.9h14.5v14.5h-14.5zM511.4 721h14.5v14.5h-14.5zM512.8 723.7h14.5v14.5h-14.5zM514.1 734.8h14.5v14.5h-14.5zM515.5 729.8h14.5v14.5h-14.5zM516.8 722h14.5v14.5h-14.5zM518.2 706.9h14.5v14.5h-14.5zM519.5 685.6h14.5v14.5h-14.5zM520.9 657.6h14.5v14.5h-14.5zM522.2 650.3h14.5v14.5h-14.5zM523.6 638.8h14.5v14.5h-14.5zM525 634.5h14.5v14.5h-14.5zM526.3 632.3h14.5v14.5h-14.5zM527.7 636.2h14.5v14.5h-14.5zM529 626.9h14.5v14.5h-14.5zM530.4 622.1h14.5v14.5h-14.5zM531.7 618.4h14.5v14.5h-14.5zM533.1 607.2h14.5v14.5h-14.5zM534.4 580.2h14.5v14.5h-14.5zM535.8 568.7h14.5v14.5h-14.5zM537.1 578.6h14.5v14.5h-14.5zM538.5 583.2h14.5v14.5h-14.5zM539.9 599.3h14.5v14.5h-14.5zM541.2 607.7h14.5v14.5h-14.5zM542.6 615.8h14.5v14.5h-14.5zM543.9 618.2h14.5v14.5h-14.5zM545.3 601.8h14.5v14.5h-14.5zM546.6 583.1h14.5v14.5h-14.5zM548 550.8h14.5v14.5h-14.5zM549.3 522.2h14.5v14.5h-14.5zM550.7 489.2h14.5v14.5h-14.5zM552 456.8h14.5v14.5h-14.5zM553.4 468.4h14.5v14.5h-14.5zM554.8 491.5h14.5v14.5h-14.5zM556.1 524.6h14.5v14.5h-14.5zM557.5 558.2h14.5v14.5h-14.5zM558.8 588h14.5v14.5h-14.5zM560.2 587.6h14.5v14.5h-14.5zM561.5 583.7h14.5v14.5h-14.5zM562.9 569.8h14.5v14.5h-14.5zM564.2 560.2h14.5v14.5h-14.5zM565.6 557.1h14.5v14.5h-14.5zM566.9 549h14.5v14.5h-14.5zM568.3 545.9h14.5v14.5h-14.5zM569.7 554.6h14.5v14.5h-14.5zM571 564.9h14.5v14.5h-14.5zM572.4 584h14.5v14.5h-14.5zM573.7 593.7h14.5v14.5h-14.5zM575.1 608h14.5v14.5h-14.5zM576.4 613.9h14.5v14.5h-14.5zM577.8 584h14.5v14.5h-14.5zM579.1 548.3h14.5v14.5h-14.5zM580.5 530.6h14.5v14.5h-14.5zM581.8 515.7h14.5v14.5h-14.5zM583.2 511.6h14.5v14.5h-14.5zM584.6 526h14.5v14.5h-14.5zM585.9 531.1h14.5v14.5h-14.5zM587.3 533.5h14.5v14.5h-14.5zM588.6 562.7h14.5v14.5h-14.5zM590 579.7h14.5v14.5h-14.5zM591.3 587.2h14.5v14.5h-14.5zM592.7 584.5h14.5v14.5h-14.5zM594 582.5h14.5v14.5h-14.5zM595.4 570.7h14.5v14.5h-14.5zM596.7 555.9h14.5v14.5h-14.5zM598.1 540.6h14.5v14.5h-14.5zM599.5 545.2h14.5v14.5h-14.5zM600.8 566.4h14.5v14.5h-14.5zM602.2 581.3h14.5v14.5h-14.5zM603.5 594.5h14.5v14.5h-14.5zM604.9 606.2h14.5v14.5h-14.5zM606.2 593.8h14.5v14.5h-14.5zM607.6 584h14.5v14.5h-14.5zM608.9 568h14.5v14.5h-14.5zM610.3 576.1h14.5v14.5h-14.5zM611.6 586.7h14.5v14.5h-14.5zM613 603.7h14.5v14.5h-14.5zM614.4 621.2h14.5v14.5h-14.5zM615.7 635.2h14.5v14.5h-14.5zM617.1 656.8h14.5v14.5h-14.5zM618.4 665.5h14.5v14.5h-14.5zM619.8 680.9h14.5v14.5h-14.5zM621.1 679.4h14.5v14.5h-14.5zM622.5 676.1h14.5v14.5h-14.5zM623.8 662.1h14.5v14.5h-14.5zM625.2 660.7h14.5v14.5h-14.5zM626.5 672.6h14.5v14.5h-14.5zM627.9 678.2h14.5v14.5h-14.5zM629.3 698.9h14.5v14.5h-14.5zM630.6 717.3h14.5v14.5h-14.5zM632 728.6h14.5v14.5h-14.5zM633.3 750.2h14.5v14.5h-14.5zM634.7 760.8h14.5v14.5h-14.5zM636 760h14.5v14.5h-14.5zM637.4 761h14.5v14.5h-14.5zM638.7 764.8h14.5v14.5h-14.5zM640.1 770.6h14.5v14.5h-14.5zM641.4 775.9h14.5v14.5h-14.5zM642.8 784.6h14.5v14.5h-14.5zM644.2 797.5h14.5v14.5h-14.5zM645.5 802.7h14.5v14.5h-14.5zM646.9 810.5h14.5v14.5h-14.5zM648.2 828.5h14.5v14.5h-14.5zM649.6 840.7h14.5v14.5h-14.5zM650.9 846.8h14.5v14.5h-14.5zM652.3 829h14.5v14.5h-14.5zM653.6 818.1h14.5v14.5h-14.5zM655 799.5h14.5v14.5h-14.5zM656.3 779.9h14.5v14.5h-14.5zM657.7 757.9h14.5v14.5h-14.5zM659.1 741.5h14.5v14.5h-14.5zM660.4 717.9h14.5v14.5h-14.5zM661.8 692.5h14.5v14.5h-14.5zM663.1 678.4h14.5v14.5h-14.5zM664.5 659.7h14.5v14.5h-14.5zM665.8 643.3h14.5v14.5h-14.5zM667.2 628.5h14.5v14.5h-14.5zM668.5 583.8h14.5v14.5h-14.5zM669.9 540.2h14.5v14.5h-14.5zM671.2 531.3h14.5v14.5h-14.5zM672.6 525.8h14.5v14.5h-14.5zM674 507.8h14.5v14.5h-14.5zM675.3 497.8h14.5v14.5h-14.5zM676.7 492.9h14.5v14.5h-14.5zM678 484.1h14.5v14.5h-14.5zM679.4 486.4h14.5v14.5h-14.5zM680.7 501h14.5v14.5h-14.5zM682.1 505.6h14.5v14.5h-14.5zM683.4 517.4h14.5v14.5h-14.5zM684.8 522.7h14.5v14.5h-14.5zM686.1 535.4h14.5v14.5h-14.5zM687.5 545.7h14.5v14.5h-14.5zM688.9 558.6h14.5v14.5h-14.5zM690.2 561.7h14.5v14.5h-14.5zM691.6 571.5h14.5v14.5h-14.5zM692.9 558.6h14.5v14.5h-14.5zM694.3 552h14.5v14.5h-14.5zM695.6 544.7h14.5v14.5h-14.5zM697 534.1h14.5v14.5h-14.5zM698.3 535.7h14.5v14.5h-14.5zM699.7 541.4h14.5v14.5h-14.5zM701 550h14.5v14.5h-14.5zM702.4 557.3h14.5v14.5h-14.5zM703.8 568h14.5v14.5h-14.5zM705.1 603.2h14.5v14.5h-14.5zM706.5 608.2h14.5v14.5h-14.5zM707.8 621.6h14.5v14.5h-14.5zM709.2 629.1h14.5v14.5h-14.5zM710.5 639.5h14.5v14.5h-14.5zM711.9 641h14.5v14.5h-14.5zM713.2 654.5h14.5v14.5h-14.5zM714.6 655.4h14.5v14.5h-14.5zM715.9 661.4h14.5v14.5h-14.5zM717.3 677.3h14.5v14.5h-14.5zM718.7 683.9h14.5v14.5h-14.5zM720 692.1h14.5v14.5h-14.5zM721.4 685.7h14.5v14.5h-14.5zM722.7 681.8h14.5v14.5h-14.5zM724.1 653.7h14.5v14.5h-14.5zM725.4 641.7h14.5v14.5h-14.5zM726.8 632.7h14.5v14.5h-14.5zM728.1 630.5h14.5v14.5h-14.5zM729.5 625.4h14.5v14.5h-14.5zM730.8 611.9h14.5v14.5h-14.5zM732.2 611.8h14.5v14.5h-14.5zM733.6 603.6h14.5v14.5h-14.5zM734.9 598.8h14.5v14.5h-14.5zM736.3 575.4h14.5v14.5h-14.5zM737.6 543.8h14.5v14.5h-14.5zM739 515.2h14.5v14.5h-14.5zM740.3 510.7h14.5v14.5h-14.5zM741.7 526.9h14.5v14.5h-14.5zM743 543.1h14.5v14.5h-14.5zM744.4 556.3h14.5v14.5h-14.5zM745.7 553.1h14.5v14.5h-14.5zM747.1 542.1h14.5v14.5h-14.5zM748.5 533.2h14.5v14.5h-14.5zM749.8 523.8h14.5v14.5h-14.5zM751.2 508.5h14.5v14.5h-14.5zM752.5 532.1h14.5v14.5h-14.5zM753.9 559.2h14.5v14.5h-14.5zM755.2 589.8h14.5v14.5h-14.5zM756.6 635.7h14.5v14.5h-14.5zM757.9 657.6h14.5v14.5h-14.5zM759.3 694.8h14.5v14.5h-14.5zM760.6 740.3h14.5v14.5h-14.5zM762 766.5h14.5v14.5h-14.5zM763.4 795.4h14.5v14.5h-14.5zM764.7 805h14.5v14.5h-14.5zM766.1 820.5h14.5v14.5h-14.5zM767.4 831.7h14.5v14.5h-14.5zM768.8 838.8h14.5v14.5h-14.5zM770.1 848.2h14.5v14.5h-14.5zM771.5 853.5h14.5v14.5h-14.5zM772.8 852.4h14.5v14.5h-14.5zM774.2 835.9h14.5v14.5h-14.5zM775.5 831.3h14.5v14.5h-14.5zM776.9 813.6h14.5v14.5h-14.5zM778.2 790.1h14.5v14.5h-14.5zM779.6 772.6h14.5v14.5h-14.5zM781 745.6h14.5v14.5h-14.5zM782.3 711.3h14.5v14.5h-14.5zM783.7 696.5h14.5v14.5h-14.5zM785 683.9h14.5v14.5h-14.5zM786.4 692.5h14.5v14.5h-14.5zM787.7 704.7h14.5v14.5h-14.5zM789.1 696h14.5v14.5h-14.5zM790.4 671.8h14.5v14.5h-14.5zM791.8 657.8h14.5v14.5h-14.5zM793.1 644h14.5v14.5h-14.5zM794.5 622.5h14.5v14.5h-14.5zM795.9 628.8h14.5v14.5h-14.5zM797.2 620h14.5v14.5h-14.5zM798.6 617h14.5v14.5h-14.5zM799.9 608.6h14.5v14.5h-14.5zM801.3 602.3h14.5v14.5h-14.5zM802.6 586.5h14.5v14.5h-14.5zM804 566.9h14.5v14.5h-14.5zM805.3 553.7h14.5v14.5h-14.5zM806.7 533.9h14.5v14.5h-14.5zM808 519.7h14.5v14.5h-14.5zM809.4 505.8h14.5v14.5h-14.5zM810.8 507.4h14.5v14.5h-14.5zM812.1 517.8h14.5v14.5h-14.5zM813.5 539.8h14.5v14.5h-14.5zM814.8 559.8h14.5v14.5h-14.5zM816.2 585.1h14.5v14.5h-14.5zM817.5 599.3h14.5v14.5h-14.5zM818.9 603.7h14.5v14.5h-14.5zM820.2 614.2h14.5v14.5h-14.5zM821.6 621.8h14.5v14.5h-14.5zM822.9 631h14.5v14.5h-14.5zM824.3 634.6h14.5v14.5h-14.5zM825.7 646.2h14.5v14.5h-14.5zM827 666.2h14.5v14.5h-14.5zM828.4 677h14.5v14.5h-14.5zM829.7 648.8h14.5v14.5h-14.5zM831.1 641h14.5v14.5h-14.5zM832.4 620.9h14.5v14.5h-14.5zM833.8 603.5h14.5v14.5h-14.5zM835.1 587.1h14.5v14.5h-14.5zM836.5 562.4h14.5v14.5h-14.5zM837.8 535.3h14.5v14.5h-14.5zM839.2 511.4h14.5v14.5h-14.5zM840.6 496.7h14.5v14.5h-14.5zM841.9 484.1h14.5v14.5h-14.5zM843.3 472.2h14.5v14.5h-14.5zM844.6 470h14.5v14.5h-14.5zM846 474.4h14.5v14.5h-14.5zM847.3 476.7h14.5v14.5h-14.5zM848.7 460.1h14.5v14.5h-14.5zM850 446.4h14.5v14.5h-14.5zM851.4 405.9h14.5v14.5h-14.5zM852.7 395.3h14.5v14.5h-14.5zM854.1 384.5h14.5v14.5h-14.5zM855.5 386.3h14.5v14.5h-14.5zM856.8 377.4h14.5v14.5h-14.5zM858.2 371.6h14.5v14.5h-14.5zM859.5 370.2h14.5v14.5h-14.5zM860.9 376.6h14.5v14.5h-14.5zM862.2 395h14.5v14.5h-14.5zM863.6 419.3h14.5v14.5h-14.5zM864.9 434.5h14.5v14.5h-14.5zM866.3 443.4h14.5v14.5h-14.5zM867.6 429.5h14.5v14.5h-14.5zM869 397.7h14.5v14.5h-14.5zM870.4 389.1h14.5v14.5h-14.5zM871.7 379.8h14.5v14.5h-14.5zM873.1 392.2h14.5v14.5h-14.5zM874.4 409.4h14.5v14.5h-14.5zM875.8 428.8h14.5v14.5h-14.5zM877.1 444.5h14.5v14.5h-14.5zM878.5 467h14.5v14.5h-14.5zM879.8 487.9h14.5v14.5h-14.5zM881.2 490.3h14.5v14.5h-14.5zM882.5 500.7h14.5v14.5h-14.5zM883.9 487.1h14.5v14.5h-14.5zM885.3 460.3h14.5v14.5h-14.5zM886.6 420.4h14.5v14.5h-14.5zM888 401h14.5v14.5h-14.5zM889.3 396.7h14.5v14.5h-14.5zM890.7 407.6h14.5v14.5h-14.5zM892 424.5h14.5v14.5h-14.5zM893.4 441.8h14.5v14.5h-14.5zM894.7 450.8h14.5v14.5h-14.5zM896.1 439.8h14.5v14.5h-14.5zM897.4 429.1h14.5v14.5h-14.5zM898.8 444.9h14.5v14.5h-14.5zM900.2 468.2h14.5v14.5h-14.5zM901.5 485.6h14.5v14.5h-14.5zM902.9 500.7h14.5v14.5h-14.5zM904.2 516.5h14.5v14.5h-14.5zM905.6 529.5h14.5v14.5h-14.5zM906.9 555.9h14.5v14.5h-14.5zM908.3 580.3h14.5v14.5h-14.5zM909.6 574.3h14.5v14.5h-14.5zM911 565.8h14.5v14.5h-14.5zM912.3 551.8h14.5v14.5h-14.5zM913.7 546.5h14.5v14.5h-14.5zM915.1 560.3h14.5v14.5h-14.5zM916.4 569.8h14.5v14.5h-14.5zM917.8 579.7h14.5v14.5h-14.5zM919.1 565.7h14.5v14.5h-14.5zM920.5 556h14.5v14.5h-14.5zM921.8 537h14.5v14.5h-14.5zM923.2 524h14.5v14.5h-14.5zM924.5 506.2h14.5v14.5h-14.5zM925.9 505.1h14.5v14.5h-14.5zM927.2 494.9h14.5v14.5h-14.5zM928.6 506.5h14.5v14.5h-14.5zM930 527.6h14.5v14.5h-14.5zM931.3 549.6h14.5v14.5h-14.5zM932.7 572.8h14.5v14.5h-14.5zM934 598.9h14.5v14.5h-14.5zM935.4 637.4h14.5v14.5h-14.5zM936.7 658.6h14.5v14.5h-14.5zM938.1 666.8h14.5v14.5h-14.5zM939.4 685.9h14.5v14.5h-14.5zM940.8 690.5h14.5v14.5h-14.5zM942.1 693.7h14.5v14.5h-14.5zM943.5 690.2h14.5v14.5h-14.5zM944.9 695.7h14.5v14.5h-14.5zM946.2 695.9h14.5v14.5h-14.5zM947.6 681.4h14.5v14.5h-14.5zM948.9 680.9h14.5v14.5h-14.5zM950.3 667.6h14.5v14.5h-14.5zM951.6 668.3h14.5v14.5h-14.5zM953 683h14.5v14.5h-14.5zM954.3 699.5h14.5v14.5h-14.5zM955.7 736.5h14.5v14.5h-14.5zM957 768.2h14.5v14.5h-14.5zM958.4 783.1h14.5v14.5h-14.5zM959.8 788.8h14.5v14.5h-14.5zM961.1 787.9h14.5v14.5h-14.5zM962.5 787.4h14.5v14.5h-14.5zM963.8 793.8h14.5v14.5h-14.5zM965.2 803.6h14.5v14.5h-14.5zM966.5 794.5h14.5v14.5h-14.5zM967.9 784.6h14.5v14.5h-14.5zM969.2 776.5h14.5v14.5h-14.5zM970.6 773.5h14.5v14.5h-14.5zM971.9 767.7h14.5v14.5h-14.5zM973.3 761.1h14.5v14.5h-14.5zM974.7 750.7h14.5v14.5h-14.5zM976 737.7h14.5v14.5h-14.5zM977.4 707.3h14.5v14.5h-14.5zM978.7 679.1h14.5v14.5h-14.5zM980.1 652.1h14.5v14.5h-14.5zM981.4 633.3h14.5v14.5h-14.5zM982.8 624.4h14.5v14.5h-14.5zM984.1 602.9h14.5v14.5h-14.5zM985.5 591.3h14.5v14.5h-14.5zM986.8 577.1h14.5v14.5h-14.5zM988.2 603.5h14.5v14.5h-14.5zM989.6 621h14.5v14.5h-14.5zM990.9 647.4h14.5v14.5h-14.5zM992.3 673h14.5v14.5h-14.5zM993.6 644.1h14.5v14.5h-14.5zM995 617.2h14.5v14.5h-14.5zM996.3 599.2h14.5v14.5h-14.5zM997.7 586.6h14.5v14.5h-14.5zM999 579.6h14.5v14.5h-14.5zM1000.4 577.4h14.5v14.5h-14.5zM1001.7 586.3h14.5v14.5h-14.5zM1003.1 592.1h14.5v14.5h-14.5zM1004.5 596h14.5v14.5h-14.5zM1005.8 595.3h14.5v14.5h-14.5zM1007.2 597.8h14.5v14.5h-14.5zM1008.5 602.8h14.5v14.5h-14.5zM1009.9 600.9h14.5v14.5h-14.5zM1011.2 606.8h14.5v14.5h-14.5zM1012.6 600.9h14.5v14.5h-14.5zM1013.9 597.8h14.5v14.5h-14.5zM1015.3 594.5h14.5v14.5h-14.5zM1016.6 596h14.5v14.5h-14.5zM1018 589.8h14.5v14.5h-14.5zM1019.4 588.5h14.5v14.5h-14.5zM1020.7 588.7h14.5v14.5h-14.5zM1022.1 592.1h14.5v14.5h-14.5zM1023.4 598.7h14.5v14.5h-14.5zM1024.8 602.7h14.5v14.5h-14.5zM1026.1 588.2h14.5v14.5h-14.5zM1027.5 582.1h14.5v14.5h-14.5zM1028.8 571.9h14.5v14.5h-14.5zM1030.2 555.2h14.5v14.5h-14.5zM1031.5 541.8h14.5v14.5h-14.5zM1032.9 516.9h14.5v14.5h-14.5zM1034.2 505.3h14.5v14.5h-14.5zM1035.6 516.8h14.5v14.5h-14.5zM1037 533.4h14.5v14.5h-14.5zM1038.3 573.6h14.5v14.5h-14.5zM1039.7 612.8h14.5v14.5h-14.5zM1041 640.9h14.5v14.5h-14.5zM1042.4 653h14.5v14.5h-14.5zM1043.7 634.6h14.5v14.5h-14.5zM1045.1 640.9h14.5v14.5h-14.5zM1046.4 654.3h14.5v14.5h-14.5zM1047.8 650.5h14.5v14.5h-14.5zM1049.1 668.7h14.5v14.5h-14.5zM1050.5 693.5h14.5v14.5h-14.5zM1051.9 725.1h14.5v14.5h-14.5zM1053.2 746.5h14.5v14.5h-14.5zM1054.6 770.7h14.5v14.5h-14.5zM1055.9 770.2h14.5v14.5h-14.5zM1057.3 786.6h14.5v14.5h-14.5zM1058.6 789.3h14.5v14.5h-14.5zM1060 795.7h14.5v14.5h-14.5zM1061.3 775.5h14.5v14.5h-14.5zM1062.7 765h14.5v14.5h-14.5zM1064 747h14.5v14.5h-14.5zM1065.4 728.7h14.5v14.5h-14.5zM1066.8 734.1h14.5v14.5h-14.5zM1068.1 731.5h14.5v14.5h-14.5zM1069.5 738.3h14.5v14.5h-14.5zM1070.8 744.2h14.5v14.5h-14.5zM1072.2 732.6h14.5v14.5h-14.5zM1073.5 722.5h14.5v14.5h-14.5zM1074.9 711.3h14.5v14.5h-14.5zM1076.2 694.6h14.5v14.5h-14.5zM1077.6 673.8h14.5v14.5h-14.5zM1078.9 641.8h14.5v14.5h-14.5zM1080.3 599.5h14.5v14.5h-14.5zM1081.7 637.6h14.5v14.5h-14.5zM1083 596.3h14.5v14.5h-14.5zM1084.4 605.5h14.5v14.5h-14.5zM1085.7 630.5h14.5v14.5h-14.5zM1087.1 652.3h14.5v14.5h-14.5zM1088.4 645.6h14.5v14.5h-14.5zM1089.8 627.7h14.5v14.5h-14.5zM1091.1 592.6h14.5v14.5h-14.5zM1092.5 592.7h14.5v14.5h-14.5zM1093.8 582.5h14.5v14.5h-14.5zM1095.2 585.4h14.5v14.5h-14.5zM1096.6 577.7h14.5v14.5h-14.5zM1097.9 582.7h14.5v14.5h-14.5zM1099.3 596.5h14.5v14.5h-14.5zM1100.6 600.7h14.5v14.5h-14.5zM1102 581.3h14.5v14.5h-14.5zM1103.3 557.3h14.5v14.5h-14.5zM1104.7 553.3h14.5v14.5h-14.5zM1106 554.7h14.5v14.5h-14.5zM1107.4 549.9h14.5v14.5h-14.5zM1108.7 550.3h14.5v14.5h-14.5zM1110.1 554.8h14.5v14.5h-14.5zM1111.5 567.7h14.5v14.5h-14.5zM1112.8 572.3h14.5v14.5h-14.5zM1114.2 583.2h14.5v14.5h-14.5zM1115.5 581.4h14.5v14.5h-14.5zM1116.9 592.1h14.5v14.5h-14.5zM1118.2 605.1h14.5v14.5h-14.5zM1119.6 645.1h14.5v14.5h-14.5zM1120.9 639.7h14.5v14.5h-14.5zM1122.3 679.4h14.5v14.5h-14.5zM1123.6 699.9h14.5v14.5h-14.5zM1125 721.3h14.5v14.5h-14.5zM1126.4 745.6h14.5v14.5h-14.5zM1127.7 772.9h14.5v14.5h-14.5zM1129.1 801.3h14.5v14.5h-14.5zM1130.4 816.5h14.5v14.5h-14.5zM1131.8 828.8h14.5v14.5h-14.5zM1133.1 849.2h14.5v14.5h-14.5zM1134.5 862.7h14.5v14.5h-14.5zM1135.8 878h14.5v14.5h-14.5zM1137.2 884.1h14.5v14.5h-14.5zM1138.5 889.9h14.5v14.5h-14.5zM1139.9 877.3h14.5v14.5h-14.5zM1141.3 882.6h14.5v14.5h-14.5zM1142.6 896h14.5v14.5h-14.5zM1144 913.7h14.5v14.5h-14.5zM1145.3 928.1h14.5v14.5h-14.5zM1146.7 935h14.5v14.5h-14.5zM1148 925.9h14.5v14.5h-14.5zM1149.4 931.1h14.5v14.5h-14.5zM1150.7 924.6h14.5v14.5h-14.5zM1152.1 914.8h14.5v14.5h-14.5zM1153.4 904.5h14.5v14.5h-14.5zM1154.8 877h14.5v14.5h-14.5zM1156.2 844.3h14.5v14.5h-14.5zM1157.5 810.8h14.5v14.5h-14.5zM1158.9 777.2h14.5v14.5h-14.5zM1160.2 761.9h14.5v14.5h-14.5zM1161.6 778.6h14.5v14.5h-14.5zM1162.9 815.2h14.5v14.5h-14.5zM1164.3 811.2h14.5v14.5h-14.5zM1165.6 812h14.5v14.5h-14.5zM1167 797.3h14.5v14.5h-14.5zM1168.3 786.2h14.5v14.5h-14.5zM1169.7 766.1h14.5v14.5h-14.5zM1171.1 740.3h14.5v14.5h-14.5zM1172.4 720h14.5v14.5h-14.5zM1173.8 696.5h14.5v14.5h-14.5zM1175.1 676.6h14.5v14.5h-14.5zM1176.5 671.4h14.5v14.5h-14.5zM1177.8 699.9h14.5v14.5h-14.5zM1179.2 730.1h14.5v14.5h-14.5zM1180.5 755.3h14.5v14.5h-14.5zM1181.9 746.1h14.5v14.5h-14.5zM1183.2 731.4h14.5v14.5h-14.5zM1184.6 713.7h14.5v14.5h-14.5zM1186 696.5h14.5v14.5h-14.5zM1187.3 667.9h14.5v14.5h-14.5zM1188.7 623.4h14.5v14.5h-14.5zM1190 604.5h14.5v14.5h-14.5zM1191.4 587.8h14.5v14.5h-14.5zM1192.7 592.5h14.5v14.5h-14.5zM1194.1 598.5h14.5v14.5h-14.5zM1195.4 596h14.5v14.5h-14.5zM1196.8 590.2h14.5v14.5h-14.5zM1198.1 583.1h14.5v14.5h-14.5zM1199.5 573.6h14.5v14.5h-14.5zM1200.9 569.2h14.5v14.5h-14.5zM1202.2 560.7h14.5v14.5h-14.5zM1203.6 560.8h14.5v14.5h-14.5zM1204.9 557.7h14.5v14.5h-14.5zM1206.3 557h14.5v14.5h-14.5zM1207.6 558.1h14.5v14.5h-14.5zM1209 572.3h14.5v14.5h-14.5zM1210.3 583.7h14.5v14.5h-14.5zM1211.7 608.6h14.5v14.5h-14.5zM1213 628h14.5v14.5h-14.5zM1214.4 646h14.5v14.5h-14.5zM1215.8 664h14.5v14.5h-14.5zM1217.1 674.2h14.5v14.5h-14.5zM1218.5 711h14.5v14.5h-14.5zM1219.8 718h14.5v14.5h-14.5zM1221.2 725.1h14.5v14.5h-14.5zM1222.5 706.2h14.5v14.5h-14.5zM1223.9 656.5h14.5v14.5h-14.5zM1225.2 671.6h14.5v14.5h-14.5zM1226.6 625.4h14.5v14.5h-14.5zM1227.9 572.5h14.5v14.5h-14.5zM1229.3 547.5h14.5v14.5h-14.5zM1230.7 556.1h14.5v14.5h-14.5zM1232 567.5h14.5v14.5h-14.5zM1233.4 566.4h14.5v14.5h-14.5zM1234.7 546.8h14.5v14.5h-14.5zM1236.1 535.5h14.5v14.5h-14.5zM1237.4 526.5h14.5v14.5h-14.5zM1238.8 522.3h14.5v14.5h-14.5zM1240.1 518.7h14.5v14.5h-14.5zM1241.5 511.7h14.5v14.5h-14.5zM1242.8 499.3h14.5v14.5h-14.5zM1244.2 496.7h14.5v14.5h-14.5zM1245.6 496.1h14.5v14.5h-14.5zM1246.9 513.1h14.5v14.5h-14.5zM1248.3 618.5h14.5v14.5h-14.5zM1249.6 668.5h14.5v14.5h-14.5zM1251 702.3h14.5v14.5h-14.5zM1252.3 711.9h14.5v14.5h-14.5zM1253.7 718.3h14.5v14.5h-14.5zM1255 725.2h14.5v14.5h-14.5zM1256.4 732.2h14.5v14.5h-14.5zM1257.7 743.8h14.5v14.5h-14.5zM1259.1 743h14.5v14.5h-14.5zM1260.5 746.5h14.5v14.5h-14.5zM1261.8 757.2h14.5v14.5h-14.5zM1263.2 776.5h14.5v14.5h-14.5zM1264.5 802h14.5v14.5h-14.5zM1265.9 809.6h14.5v14.5h-14.5zM1267.2 814.4h14.5v14.5h-14.5zM1268.6 802.3h14.5v14.5h-14.5zM1269.9 766.1h14.5v14.5h-14.5zM1271.3 744.4h14.5v14.5h-14.5zM1272.6 720.5h14.5v14.5h-14.5zM1274 699.3h14.5v14.5h-14.5zM1275.4 675.9h14.5v14.5h-14.5zM1276.7 655.3h14.5v14.5h-14.5zM1278.1 626.1h14.5v14.5h-14.5zM1279.4 604.6h14.5v14.5h-14.5zM1280.8 591.5h14.5v14.5h-14.5zM1282.1 584.4h14.5v14.5h-14.5zM1283.5 574h14.5v14.5h-14.5zM1284.8 569.9h14.5v14.5h-14.5zM1286.2 581.7h14.5v14.5h-14.5zM1287.5 591.9h14.5v14.5h-14.5zM1288.9 613.3h14.5v14.5h-14.5zM1290.3 631.5h14.5v14.5h-14.5zM1291.6 641.4h14.5v14.5h-14.5zM1293 653.5h14.5v14.5h-14.5zM1294.3 657.9h14.5v14.5h-14.5zM1295.7 662.1h14.5v14.5h-14.5zM1297 669.3h14.5v14.5h-14.5zM1298.4 677h14.5v14.5h-14.5zM1299.7 705.7h14.5v14.5h-14.5zM1301.1 745.3h14.5v14.5h-14.5zM1302.4 773.8h14.5v14.5h-14.5zM1303.8 801.6h14.5v14.5h-14.5zM1305.1 813.7h14.5v14.5h-14.5zM1306.5 817.1h14.5v14.5h-14.5zM1307.9 810.1h14.5v14.5h-14.5zM1309.2 797.5h14.5v14.5h-14.5zM1310.6 807.9h14.5v14.5h-14.5zM1311.9 820.8h14.5v14.5h-14.5zM1313.3 838.3h14.5v14.5h-14.5zM1314.6 855.5h14.5v14.5h-14.5zM1316 858.1h14.5v14.5h-14.5zM1317.3 838.7h14.5v14.5h-14.5zM1318.7 821.4h14.5v14.5h-14.5zM1320 807.9h14.5v14.5h-14.5zM1321.4 798.6h14.5v14.5h-14.5zM1322.8 790h14.5v14.5h-14.5zM1324.1 779.3h14.5v14.5h-14.5zM1325.5 767.1h14.5v14.5h-14.5zM1326.8 719.2h14.5v14.5h-14.5zM1328.2 693h14.5v14.5h-14.5zM1329.5 679.1h14.5v14.5h-14.5zM1330.9 659.5h14.5v14.5h-14.5zM1332.2 641.1h14.5v14.5h-14.5zM1333.6 628.7h14.5v14.5h-14.5zM1334.9 649.9h14.5v14.5h-14.5zM1336.3 636.4h14.5v14.5h-14.5zM1337.7 627.2h14.5v14.5h-14.5zM1339 632.8h14.5v14.5h-14.5zM1340.4 648.6h14.5v14.5h-14.5zM1341.7 662.5h14.5v14.5h-14.5zM1343.1 675.6h14.5v14.5h-14.5zM1344.4 643h14.5v14.5h-14.5zM1345.8 610h14.5v14.5h-14.5zM1347.1 622.9h14.5v14.5h-14.5zM1348.5 630.3h14.5v14.5h-14.5zM1349.8 617.1h14.5v14.5h-14.5zM1351.2 616h14.5v14.5h-14.5zM1352.6 605h14.5v14.5h-14.5zM1353.9 596.5h14.5v14.5h-14.5zM1355.3 584.9h14.5v14.5h-14.5zM1356.6 601.3h14.5v14.5h-14.5zM1358 630.6h14.5v14.5h-14.5zM1359.3 650.3h14.5v14.5h-14.5zM1360.7 654.1h14.5v14.5h-14.5zM1362 637h14.5v14.5h-14.5zM1363.4 604.7h14.5v14.5h-14.5zM1364.7 561.9h14.5v14.5h-14.5zM1366.1 568.9h14.5v14.5h-14.5zM1367.5 579.8h14.5v14.5h-14.5zM1368.8 605.6h14.5v14.5h-14.5zM1370.2 624.9h14.5v14.5h-14.5zM1371.5 639.4h14.5v14.5h-14.5zM1372.9 646.3h14.5v14.5h-14.5zM1374.2 668.7h14.5v14.5h-14.5zM1375.6 681.5h14.5v14.5h-14.5zM1376.9 688.8h14.5v14.5h-14.5zM1378.3 659.6h14.5v14.5h-14.5zM1379.6 622.3h14.5v14.5h-14.5zM1381 592.2h14.5v14.5h-14.5zM1382.4 574.2h14.5v14.5h-14.5zM1383.7 549.5h14.5v14.5h-14.5zM1385.1 553.2h14.5v14.5h-14.5zM1386.4 553.4h14.5v14.5h-14.5zM1387.8 568h14.5v14.5h-14.5zM1389.1 580.9h14.5v14.5h-14.5zM1390.5 580.1h14.5v14.5h-14.5zM1391.8 558h14.5v14.5h-14.5zM1393.2 539.7h14.5v14.5h-14.5zM1394.5 529.3h14.5v14.5h-14.5zM1395.9 512.6h14.5v14.5h-14.5zM1397.3 509.6h14.5v14.5h-14.5zM1398.6 525.5h14.5v14.5h-14.5zM1400 541.5h14.5v14.5h-14.5zM1401.3 556.5h14.5v14.5h-14.5zM1402.7 570.4h14.5v14.5h-14.5zM1404 589.2h14.5v14.5h-14.5zM1405.4 612.2h14.5v14.5h-14.5zM1406.7 634.2h14.5v14.5h-14.5zM1408.1 658.1h14.5v14.5h-14.5zM1409.4 681h14.5v14.5h-14.5zM1410.8 689.3h14.5v14.5h-14.5zM1412.2 698.6h14.5v14.5h-14.5zM1413.5 720.4h14.5v14.5h-14.5zM1414.9 746.4h14.5v14.5h-14.5zM1416.2 757.9h14.5v14.5h-14.5zM1417.6 772.3h14.5v14.5h-14.5zM1418.9 780.3h14.5v14.5h-14.5zM1420.3 791.8h14.5v14.5h-14.5zM1421.6 793.9h14.5v14.5h-14.5zM1423 805.3h14.5v14.5h-14.5zM1424.3 815.4h14.5v14.5h-14.5zM1425.7 810.6h14.5v14.5h-14.5zM1427.1 802h14.5v14.5h-14.5zM1428.4 787.9h14.5v14.5h-14.5zM1429.8 778.6h14.5v14.5h-14.5zM1431.1 759.9h14.5v14.5h-14.5zM1432.5 734.8h14.5v14.5h-14.5zM1433.8 707.4h14.5v14.5h-14.5zM1435.2 680h14.5v14.5h-14.5zM1436.5 650.3h14.5v14.5h-14.5zM1437.9 632h14.5v14.5h-14.5zM1439.2 622.5h14.5v14.5h-14.5zM1440.6 624h14.5v14.5h-14.5zM1442 619h14.5v14.5h-14.5zM1443.3 605h14.5v14.5h-14.5zM1444.7 597.7h14.5v14.5h-14.5zM1446 586h14.5v14.5h-14.5zM1447.4 577.4h14.5v14.5h-14.5zM1448.7 559.9h14.5v14.5h-14.5zM1450.1 555.7h14.5v14.5h-14.5zM1451.4 554.3h14.5v14.5h-14.5zM1452.8 549.1h14.5v14.5h-14.5zM1454.1 552.5h14.5v14.5h-14.5zM1455.5 539.5h14.5v14.5h-14.5zM1456.9 538.8h14.5v14.5h-14.5zM1458.2 535.5h14.5v14.5h-14.5zM1459.6 533.4h14.5v14.5h-14.5zM1460.9 535.2h14.5v14.5h-14.5zM1462.3 538h14.5v14.5h-14.5zM1463.6 530.3h14.5v14.5h-14.5zM1465 539.1h14.5v14.5h-14.5zM1466.3 546.7h14.5v14.5h-14.5zM1467.7 560.8h14.5v14.5h-14.5zM1469 581.4h14.5v14.5h-14.5zM1470.4 607.4h14.5v14.5h-14.5zM1471.8 602.5h14.5v14.5h-14.5zM1473.1 611.3h14.5v14.5h-14.5zM1474.5 614.6h14.5v14.5h-14.5zM1475.8 619.6h14.5v14.5h-14.5zM1477.2 634.8h14.5v14.5h-14.5zM1478.5 641.6h14.5v14.5h-14.5zM1479.9 610.7h14.5v14.5h-14.5zM1481.2 609h14.5v14.5h-14.5zM1482.6 604.1h14.5v14.5h-14.5zM1483.9 599.6h14.5v14.5h-14.5zM1485.3 601.8h14.5v14.5h-14.5zM1486.7 589.2h14.5v14.5h-14.5zM1488 589.4h14.5v14.5h-14.5zM1489.4 577.4h14.5v14.5h-14.5zM1490.7 558.3h14.5v14.5h-14.5zM1492.1 538.6h14.5v14.5h-14.5zM1493.4 536.9h14.5v14.5h-14.5zM1494.8 543.7h14.5v14.5h-14.5zM1496.1 549.3h14.5v14.5h-14.5zM1497.5 556.2h14.5v14.5h-14.5zM1498.8 549.8h14.5v14.5h-14.5zM1500.2 542.8h14.5v14.5h-14.5zM1501.6 541h14.5v14.5h-14.5zM1502.9 541.6h14.5v14.5h-14.5zM1504.3 554.9h14.5v14.5h-14.5zM1505.6 563.2h14.5v14.5h-14.5zM1507 562.4h14.5v14.5h-14.5zM1508.3 576.5h14.5v14.5h-14.5zM1509.7 586h14.5v14.5h-14.5zM1511 607.9h14.5v14.5h-14.5zM1512.4 643.3h14.5v14.5h-14.5zM1513.7 692.9h14.5v14.5h-14.5zM1515.1 725.6h14.5v14.5h-14.5zM1516.5 746.3h14.5v14.5h-14.5zM1517.8 759.4h14.5v14.5h-14.5zM1519.2 768.9h14.5v14.5h-14.5zM1520.5 801.8h14.5v14.5h-14.5zM1521.9 840.5h14.5v14.5h-14.5zM1523.2 855.5h14.5v14.5h-14.5zM1524.6 856.7h14.5v14.5h-14.5zM1525.9 850.6h14.5v14.5h-14.5zM1527.3 839.7h14.5v14.5h-14.5zM1528.6 828h14.5v14.5h-14.5zM1530 816.4h14.5v14.5h-14.5zM1531.4 800h14.5v14.5h-14.5zM1532.7 758.1h14.5v14.5h-14.5zM1534.1 727.3h14.5v14.5h-14.5zM1535.4 687h14.5v14.5h-14.5zM1536.8 673.7h14.5v14.5h-14.5zM1538.1 634.4h14.5v14.5h-14.5zM1539.5 582.2h14.5v14.5h-14.5zM1540.8 536.9h14.5v14.5h-14.5zM1542.2 491.6h14.5v14.5h-14.5zM1543.5 469.3h14.5v14.5h-14.5zM1544.9 456.4h14.5v14.5h-14.5zM1546.3 449.3h14.5v14.5h-14.5zM1547.6 453.6h14.5v14.5h-14.5zM1549 441.7h14.5v14.5h-14.5zM1550.3 440.2h14.5v14.5h-14.5zM1551.7 447.3h14.5v14.5h-14.5zM1553 453.1h14.5v14.5h-14.5zM1554.4 475.7h14.5v14.5h-14.5zM1555.7 512h14.5v14.5h-14.5zM1557.1 547.7h14.5v14.5h-14.5zM1558.4 594.4h14.5v14.5h-14.5zM1559.8 656.5h14.5v14.5h-14.5zM1561.2 689.6h14.5v14.5h-14.5zM1562.5 709h14.5v14.5h-14.5zM1563.9 713.7h14.5v14.5h-14.5zM1565.2 725.5h14.5v14.5h-14.5zM1566.6 734.6h14.5v14.5h-14.5zM1567.9 752.5h14.5v14.5h-14.5zM1569.3 802.3h14.5v14.5h-14.5zM1570.6 840.6h14.5v14.5h-14.5zM1572 857h14.5v14.5h-14.5zM1573.3 878.5h14.5v14.5h-14.5zM1574.7 873.3h14.5v14.5h-14.5zM1576.1 856.5h14.5v14.5h-14.5zM1577.4 853.9h14.5v14.5h-14.5zM1578.8 843.4h14.5v14.5h-14.5zM1580.1 825.8h14.5v14.5h-14.5zM1581.5 808.4h14.5v14.5h-14.5zM1582.8 795.7h14.5v14.5h-14.5zM1584.2 778.5h14.5v14.5h-14.5zM1585.5 764.1h14.5v14.5h-14.5zM1586.9 742.9h14.5v14.5h-14.5zM1588.2 728.8h14.5v14.5h-14.5zM1589.6 723.8h14.5v14.5h-14.5zM1590.9 708.1h14.5v14.5h-14.5zM1592.3 691.1h14.5v14.5h-14.5zM1593.7 673.3h14.5v14.5h-14.5zM1595 670.3h14.5v14.5h-14.5zM1596.4 646.8h14.5v14.5h-14.5zM1597.7 634.8h14.5v14.5h-14.5zM1599.1 636h14.5v14.5h-14.5zM1600.4 622.9h14.5v14.5h-14.5zM1601.8 608.3h14.5v14.5h-14.5zM1603.1 600.9h14.5v14.5h-14.5zM1604.5 609.1h14.5v14.5h-14.5zM1605.8 618.6h14.5v14.5h-14.5zM1607.2 637.1h14.5v14.5h-14.5zM1608.6 657.4h14.5v14.5h-14.5zM1609.9 669.4h14.5v14.5h-14.5zM1611.3 665.8h14.5v14.5h-14.5zM1612.6 654.6h14.5v14.5h-14.5zM1614 652.1h14.5v14.5h-14.5zM1615.3 695.5h14.5v14.5h-14.5zM1616.7 737.2h14.5v14.5h-14.5zM1618 755.5h14.5v14.5h-14.5zM1619.4 766.1h14.5v14.5h-14.5zM1620.7 782.1h14.5v14.5h-14.5zM1622.1 786.9h14.5v14.5h-14.5zM1623.5 779.7h14.5v14.5h-14.5zM1624.8 776.4h14.5v14.5h-14.5zM1626.2 792.6h14.5v14.5h-14.5zM1627.5 807.4h14.5v14.5h-14.5zM1628.9 819.8h14.5v14.5h-14.5zM1630.2 823.3h14.5v14.5h-14.5zM1631.6 825.5h14.5v14.5h-14.5zM1632.9 825.8h14.5v14.5h-14.5zM1634.3 821.8h14.5v14.5h-14.5zM1635.6 821.6h14.5v14.5h-14.5zM1637 804.9h14.5v14.5h-14.5zM1638.4 779.6h14.5v14.5h-14.5zM1639.7 748h14.5v14.5h-14.5zM1641.1 729.6h14.5v14.5h-14.5zM1642.4 721.2h14.5v14.5h-14.5zM1643.8 708.8h14.5v14.5h-14.5zM1645.1 708.9h14.5v14.5h-14.5zM1646.5 707.1h14.5v14.5h-14.5zM1647.8 702.4h14.5v14.5h-14.5zM1649.2 693.2h14.5v14.5h-14.5zM1650.5 695.1h14.5v14.5h-14.5zM1651.9 690.4h14.5v14.5h-14.5zM1653.3 691.4h14.5v14.5h-14.5zM1654.6 674.9h14.5v14.5h-14.5zM1656 667.4h14.5v14.5h-14.5zM1657.3 645.8h14.5v14.5h-14.5zM1658.7 620.9h14.5v14.5h-14.5zM1660 609.4h14.5v14.5h-14.5zM1661.4 598.4h14.5v14.5h-14.5zM1662.7 585h14.5v14.5h-14.5zM1664.1 572.4h14.5v14.5h-14.5zM1665.4 568.3h14.5v14.5h-14.5zM1666.8 572.2h14.5v14.5h-14.5zM1668.2 570.5h14.5v14.5h-14.5zM1669.5 559.3h14.5v14.5h-14.5zM1670.9 538.1h14.5v14.5h-14.5zM1672.2 495.5h14.5v14.5h-14.5zM1673.6 437.7h14.5v14.5h-14.5zM1674.9 386.5h14.5v14.5h-14.5zM1676.3 343.7h14.5v14.5h-14.5zM1677.6 350h14.5v14.5h-14.5zM1679 355.9h14.5v14.5h-14.5zM1680.3 382.8h14.5v14.5h-14.5zM1681.7 401.6h14.5v14.5h-14.5zM1683.1 411.9h14.5v14.5h-14.5zM1684.4 417.1h14.5v14.5h-14.5zM1685.8 440.7h14.5v14.5h-14.5zM1687.1 486.9h14.5v14.5h-14.5zM1688.5 517.2h14.5v14.5h-14.5zM1689.8 557.3h14.5v14.5h-14.5zM1691.2 590.9h14.5v14.5h-14.5zM1692.5 647.5h14.5v14.5h-14.5zM1693.9 693.6h14.5v14.5h-14.5zM1695.2 733h14.5v14.5h-14.5zM1696.6 767.1h14.5v14.5h-14.5zM1698 804h14.5v14.5h-14.5zM1699.3 845.9h14.5v14.5h-14.5zM1700.7 875h14.5v14.5h-14.5zM1702 892.9h14.5v14.5h-14.5zM1703.4 914.1h14.5v14.5h-14.5zM1704.7 903.7h14.5v14.5h-14.5zM1706.1 892.8h14.5v14.5h-14.5zM1707.4 870.9h14.5v14.5h-14.5zM1708.8 829h14.5v14.5h-14.5zM1710.1 795.2h14.5v14.5h-14.5zM1711.5 758.7h14.5v14.5h-14.5zM1712.9 735.6h14.5v14.5h-14.5zM1714.2 731.5h14.5v14.5h-14.5zM1715.6 733.4h14.5v14.5h-14.5zM1716.9 725.5h14.5v14.5h-14.5zM1718.3 709.1h14.5v14.5h-14.5zM1719.6 664.9h14.5v14.5h-14.5zM1721 638.7h14.5v14.5h-14.5zM1722.3 613.8h14.5v14.5h-14.5zM1723.7 572.9h14.5v14.5h-14.5zM1725 579.5h14.5v14.5h-14.5zM1726.4 581.3h14.5v14.5h-14.5zM1727.8 591.4h14.5v14.5h-14.5zM1729.1 596.4h14.5v14.5h-14.5zM1730.5 590.8h14.5v14.5h-14.5zM1731.8 586.7h14.5v14.5h-14.5zM1733.2 586.1h14.5v14.5h-14.5zM1734.5 582h14.5v14.5h-14.5zM1735.9 582.4h14.5v14.5h-14.5zM1737.2 581.9h14.5v14.5h-14.5zM1738.6 570.8h14.5v14.5h-14.5zM1739.9 569.5h14.5v14.5h-14.5zM1741.3 569.3h14.5v14.5h-14.5zM1742.7 567.7h14.5v14.5h-14.5zM1744 562.8h14.5v14.5h-14.5zM1745.4 570.9h14.5v14.5h-14.5zM1746.7 588.9h14.5v14.5h-14.5zM1748.1 594.3h14.5v14.5h-14.5zM1749.4 628.1h14.5v14.5h-14.5zM1750.8 656.4h14.5v14.5h-14.5zM1752.1 660.6h14.5v14.5h-14.5zM1753.5 669.1h14.5v14.5h-14.5zM1754.8 621.1h14.5v14.5h-14.5zM1756.2 646.1h14.5v14.5h-14.5zM1757.6 633.7h14.5v14.5h-14.5zM1758.9 623h14.5v14.5h-14.5zM1760.3 609.8h14.5v14.5h-14.5zM1761.6 596h14.5v14.5h-14.5zM1763 603.2h14.5v14.5h-14.5zM1764.3 616.4h14.5v14.5h-14.5zM1765.7 654.2h14.5v14.5h-14.5zM1767 664.6h14.5v14.5h-14.5zM1768.4 639h14.5v14.5h-14.5zM1769.7 606.1h14.5v14.5h-14.5zM1771.1 568.9h14.5v14.5h-14.5zM1772.5 570.9h14.5v14.5h-14.5zM1773.8 579h14.5v14.5h-14.5zM1775.2 587.7h14.5v14.5h-14.5zM1776.5 597.6h14.5v14.5h-14.5zM1777.9 605.6h14.5v14.5h-14.5zM1779.2 610.7h14.5v14.5h-14.5zM1780.6 611h14.5v14.5h-14.5zM1781.9 627.5h14.5v14.5h-14.5zM1783.3 641.6h14.5v14.5h-14.5zM1784.6 675.4h14.5v14.5h-14.5zM1786 714.7h14.5v14.5h-14.5zM1787.4 724h14.5v14.5h-14.5zM1788.7 744.5h14.5v14.5h-14.5zM1790.1 747.7h14.5v14.5h-14.5zM1791.4 759.2h14.5v14.5h-14.5zM1792.8 752.6h14.5v14.5h-14.5zM1794.1 752.6h14.5v14.5h-14.5zM1795.5 763.3h14.5v14.5h-14.5zM1796.8 768.2h14.5v14.5h-14.5zM1798.2 782.9h14.5v14.5h-14.5zM1799.5 807.3h14.5v14.5h-14.5zM1800.9 834.5h14.5v14.5h-14.5zM1802.3 853.5h14.5v14.5h-14.5zM1803.6 832.8h14.5v14.5h-14.5zM1805 792.7h14.5v14.5h-14.5zM1806.3 748.2h14.5v14.5h-14.5zM1807.7 700.6h14.5v14.5h-14.5zM1809 677.5h14.5v14.5h-14.5zM1810.4 659.8h14.5v14.5h-14.5zM1811.7 656.1h14.5v14.5h-14.5zM1813.1 649.9h14.5v14.5h-14.5zM1814.4 651.2h14.5v14.5h-14.5zM1815.8 643.9h14.5v14.5h-14.5zM1817.2 620.2h14.5v14.5h-14.5zM1818.5 599.6h14.5v14.5h-14.5zM1819.9 566.9h14.5v14.5h-14.5zM1821.2 533.4h14.5v14.5h-14.5zM1822.6 516.3h14.5v14.5h-14.5zM1823.9 520.9h14.5v14.5h-14.5zM1825.3 532.8h14.5v14.5h-14.5zM1826.6 559.5h14.5v14.5h-14.5zM1828 584.8h14.5v14.5h-14.5zM1829.3 600.7h14.5v14.5h-14.5zM1830.7 611.8h14.5v14.5h-14.5zM1832.1 596.1h14.5v14.5h-14.5zM1833.4 579.8h14.5v14.5h-14.5zM1834.8 557.3h14.5v14.5h-14.5zM1836.1 512.9h14.5v14.5h-14.5zM1837.5 501.6h14.5v14.5h-14.5zM1838.8 513.7h14.5v14.5h-14.5zM1840.2 532.2h14.5v14.5h-14.5zM1841.5 562.9h14.5v14.5h-14.5zM1842.9 553.2h14.5v14.5h-14.5zM1844.2 545.8h14.5v14.5h-14.5zM1845.6 545.7h14.5v14.5h-14.5z" fill="none" stroke="#ff7f0e" stroke-width="1.5"/>
<polyline points="499.7,660.5 501.1,660.5 502.4,660.5 503.8,660.5 505.1,664 506.5,668.9 507.8,673.9 509.2,679.9 510.5,689.9 511.9,699.8 513.2,709.7 514.6,716 516,720.8 517.3,725.7 518.7,730.6 520,735.5 521.4,740.3 522.7,729.5 524.1,717.3 525.4,698.7 526.8,675.7 528.1,657.1 529.5,650.3 530.9,643.5 532.2,640.6 533.6,637.4 534.9,634.1 536.3,630.9 537.6,627.6 539,621.6 540.3,597.9 541.7,574.2 543,578.2 544.4,588.5 545.8,598.9 547.1,609.5 548.5,620.3 549.8,631.1 551.2,616.2 552.5,601.3 553.9,574.5 555.2,542 556.6,510.9 557.9,482.4 559.3,455.7 560.7,486.2 562,516.7 563.4,547.7 564.7,582.4 566.1,602.1 567.4,592.2 568.8,582.3 570.1,572.4 571.5,566.5 572.8,561 574.2,555.6 575.6,557.6 576.9,570.2 578.3,582.8 579.6,595.5 581,607.7 582.3,619.9 583.7,604.6 585,570.7 586.4,543 587.7,531.5 589.1,519.9 590.5,525.8 591.8,532.5 593.2,539.3 594.5,553 595.9,574.7 597.2,593.5 598.6,594.9 599.9,596.2 601.3,584.4 602.6,569.5 604,554.6 605.4,549.5 606.7,564.8 608.1,580 609.4,595.2 610.8,610.5 612.1,606.8 613.5,594.1 614.8,581.5 616.2,574.3 617.5,589.7 618.9,605.2 620.3,620.6 621.6,636.1 623,653.8 624.3,669.8 625.7,682 627,693 628.4,684 629.7,674.9 631.1,665.9 632.4,668.2 633.8,679.1 635.1,692.6 636.5,714.3 637.9,735.9 639.2,748.8 640.6,761 641.9,767 643.3,768.8 644.6,770.6 646,773.1 647.3,781.3 648.7,789.4 650,797.5 651.4,805.6 652.8,813.8 654.1,824.4 655.5,840.6 656.8,856.9 658.2,845.3 659.5,833.1 660.9,816.5 662.2,796.2 663.6,775 664.9,754.2 666.3,731.2 667.7,712.2 669,688.7 670.4,674.3 671.7,663.2 673.1,639.2 674.4,623.7 675.8,555.2 677.1,544.4 678.5,533.5 679.8,523.7 681.2,514.2 682.6,504.7 683.9,495.2 685.3,487 686.6,499.2 688,511.4 689.3,519.6 690.7,526.4 692,534.8 693.4,545.7 694.7,556.5 696.1,567.3 697.5,578.2 698.8,573.5 700.2,564 701.5,554.5 702.9,545.1 704.2,537.5 705.6,545 706.9,552.4 708.3,559.9 709.6,567.3 711,589 712.4,617.3 713.7,623.6 715.1,629.9 716.4,636.3 717.8,650.2 719.1,654.9 720.5,659.7 721.8,664.4 723.2,671.1 724.5,687.3 725.9,699.5 727.3,696.2 728.6,690.1 730,674.5 731.3,654 732.7,642.1 734,636.9 735.4,631.8 736.7,626.1 738.1,620.3 739.4,614.6 740.8,608.8 742.2,597.2 743.5,565.4 744.9,533.6 746.2,517 747.6,525.4 748.9,542.1 750.3,558.8 751.6,568.3 753,556.5 754.3,544.6 755.7,532.8 757.1,520.9 758.4,530.5 759.8,554.2 761.1,581.1 762.5,641 763.8,649.6 765.2,683.6 766.5,728.4 767.9,763.1 769.2,790.4 770.6,807.3 772,822.1 773.3,836.5 774.7,846.7 776,856.9 777.4,858.6 778.7,855.9 780.1,850.7 781.4,840.5 782.8,830.3 784.1,811.3 785.5,787.8 786.9,760.6 788.2,732.9 789.6,710.7 790.9,697.1 792.3,695.1 793.6,704.6 795,708.8 796.3,688.5 797.7,670.3 799,653.9 800.4,638.8 801.8,639.5 803.1,632.2 804.5,624.9 805.8,617.5 807.2,610.2 808.5,599.2 809.9,582.9 811.2,566.7 812.6,550.4 813.9,534.2 815.3,523.6 816.7,514.8 818,518.3 819.4,537.3 820.7,556.5 822.1,577.5 823.4,598.5 824.8,609.2 826.1,617.2 827.5,625.3 828.8,633.3 830.2,641.4 831.6,649.4 832.9,657.5 834.3,678.9 835.6,666.1 837,644.2 838.3,632.4 839.7,620.7 841,608.7 842.4,580.3 843.7,551.9 845.1,530.9 846.5,513.3 847.8,497.6 849.2,485.4 850.5,474 851.9,480.7 853.2,487.5 854.6,476.9 855.9,459.3 857.3,433.7 858.6,403.2 860,397.8 861.4,392.4 862.7,387 864.1,381.5 865.4,376.1 866.8,380.3 868.1,397.9 869.5,415.7 870.8,434.6 872.2,453.6 873.5,440.2 874.9,417.2 876.3,400.5 877.6,391.7 879,386.4 880.3,406 881.7,425.6 883,445.5 884.4,465.3 885.7,485.2 887.1,500.1 888.4,504.2 889.8,508.3 891.2,477.6 892.5,446.5 893.9,421.8 895.2,401.7 896.6,411.8 897.9,423.3 899.3,440.9 900.6,458.5 902,451.9 903.3,441 904.7,446.6 906,467 907.4,485.9 908.8,499.4 910.1,513 911.5,531.3 912.8,553.2 914.2,576.2 915.5,585.9 916.9,575.1 918.2,564.3 919.6,553.4 920.9,561.4 922.3,571.3 923.7,581.3 925,580.8 926.4,565.9 927.7,551 929.1,536.1 930.4,521.2 931.8,513.1 933.1,507 934.5,510.6 935.8,526.2 937.2,542.8 938.6,567.2 939.9,594.2 941.3,616.9 942.6,647.7 944,674.1 945.3,686.3 946.7,696.8 948,697.4 949.4,698.1 950.7,698.8 952.1,699.5 953.5,696.2 954.8,689 956.2,681.7 957.5,674.8 958.9,685.6 960.2,696.5 961.6,731 962.9,766.9 964.3,782.7 965.6,790.2 967,793.6 968.4,797 969.7,801.6 971.1,806.3 972.4,803.5 973.8,794.7 975.1,786.9 976.5,782.4 977.8,777.9 979.2,773.4 980.5,763.1 981.9,750.9 983.3,730.7 984.6,700.3 986,672.4 987.3,649.4 988.7,642 990,621.5 991.4,601.9 992.7,584.9 994.1,595.2 995.4,614.4 996.8,633.5 998.2,682.1 999.5,666.6 1000.9,635.1 1002.2,612.1 1003.6,598.5 1004.9,587.4 1006.3,590.2 1007.6,592.9 1009,595.6 1010.3,598.3 1011.7,601 1013.1,603.5 1014.4,605.5 1015.8,607.5 1017.1,609.6 1018.5,611.6 1019.8,610 1021.2,606.7 1022.5,603.5 1023.9,600.2 1025.2,597 1026.6,593.7 1028,596.5 1029.3,600.1 1030.7,603.7 1032,602.3 1033.4,593.3 1034.7,584.3 1036.1,575.3 1037.4,554.7 1038.8,532.8 1040.1,510.8 1041.5,519.2 1042.9,531.4 1044.2,561.8 1045.6,606.3 1046.9,634 1048.3,652.6 1049.6,650.9 1051,646.5 1052.3,652.6 1053.7,658.8 1055,665 1056.4,691.3 1057.8,718.4 1059.1,742 1060.5,763.7 1061.8,781.1 1063.2,789.2 1064.5,797.3 1065.9,805.5 1067.2,792.1 1068.6,774.3 1069.9,760.1 1071.3,746 1072.7,735.3 1074,739.8 1075.4,744.3 1076.7,748.8 1078.1,743.3 1079.4,733.3 1080.8,723.4 1082.1,711 1083.5,689.4 1084.8,667.7 1086.2,625.8 1087.6,581.4 1088.9,622.2 1090.3,606.6 1091.6,624.3 1093,643 1094.3,658.1 1095.7,643.6 1097,616 1098.4,600.4 1099.7,596.3 1101.1,592.3 1102.5,588.2 1103.8,584.1 1105.2,595.3 1106.5,607.5 1107.9,598.9 1109.2,577.2 1110.6,561.3 1111.9,559.5 1113.3,557.7 1114.6,555.9 1116,561.4 1117.4,568.6 1118.7,575.8 1120.1,582.5 1121.4,587.9 1122.8,593.3 1124.1,598.7 1125.5,617.7 1126.8,651.1 1128.2,669.1 1129.5,691.3 1130.9,716.1 1132.3,736.6 1133.6,762.3 1135,798.3 1136.3,813.8 1137.7,829.7 1139,846 1140.4,862.5 1141.7,879.5 1143.1,884.9 1144.4,890.4 1145.8,890.9 1147.2,889.5 1148.5,895.5 1149.9,912.4 1151.2,929.1 1152.6,942.6 1153.9,940.7 1155.3,937.3 1156.6,931.1 1158,923 1159.3,913.8 1160.7,900.1 1162.1,873 1163.4,834.4 1164.8,796.2 1166.1,774.1 1167.5,778.3 1168.8,802 1170.2,822.1 1171.5,818 1172.9,813.9 1174.2,798.9 1175.6,781.3 1177,757.8 1178.3,732.4 1179.7,716.1 1181,699.9 1182.4,672.8 1183.7,690.9 1185.1,718 1186.4,746.5 1187.8,760.7 1189.1,745.8 1190.5,730.8 1191.8,710.5 1193.2,690.2 1194.6,652.2 1195.9,623.1 1197.3,608.2 1198.6,597.3 1200,601.4 1201.3,605.5 1202.7,599.3 1204,591.9 1205.4,584.4 1206.7,577 1208.1,570.8 1209.5,568.8 1210.8,566.7 1212.2,564.7 1213.5,562.7 1214.9,569.9 1216.2,583.4 1217.6,600.6 1218.9,626.8 1220.3,645.3 1221.6,660.5 1223,673.1 1224.4,697.9 1225.7,719.3 1227.1,727.4 1228.4,728.7 1229.8,685.6 1231.1,642.5 1232.5,656.3 1233.8,605.3 1235.2,565.8 1236.5,553.6 1237.9,567.2 1239.3,580.7 1240.6,563.2 1242,545.6 1243.3,536.8 1244.7,532.3 1246,527.7 1247.4,522.3 1248.7,512.9 1250.1,503.6 1251.4,498 1252.8,511.5 1254.2,562.8 1255.5,643.9 1256.9,702.1 1258.2,713 1259.6,723.8 1260.9,730.6 1262.3,737 1263.6,743.3 1265,749.2 1266.3,754.6 1267.7,760.7 1269.1,774.3 1270.4,795.3 1271.8,812.1 1273.1,827.3 1274.5,811.5 1275.8,789.4 1277.2,760 1278.5,734.3 1279.9,713.7 1281.2,696.5 1282.6,673.5 1284,649.6 1285.3,623.9 1286.7,610.4 1288,596.8 1289.4,585.9 1290.7,575.1 1292.1,580.1 1293.4,593.6 1294.8,610.3 1296.1,631.9 1297.5,647.1 1298.9,655 1300.2,661.7 1301.6,668.3 1302.9,675 1304.3,681.7 1305.6,698.5 1307,735.3 1308.3,767.9 1309.7,795.7 1311,810.9 1312.4,821 1313.8,822.9 1315.1,811.4 1316.5,801.5 1317.8,818.4 1319.2,835.4 1320.5,851.9 1321.9,865.3 1323.2,851.7 1324.6,838.2 1325.9,824.4 1327.3,808.1 1328.7,800.6 1330,793.8 1331.4,777.4 1332.7,744.8 1334.1,711.7 1335.4,695.2 1336.8,681.6 1338.1,661.9 1339.5,641.8 1340.8,647.5 1342.2,652.7 1343.6,639.4 1344.9,630.5 1346.3,649.3 1347.6,668 1349,682.5 1350.3,666.2 1351.7,634 1353,620.9 1354.4,641.7 1355.7,633.2 1357.1,624.6 1358.5,616 1359.8,607.4 1361.2,598.9 1362.5,600.9 1363.9,622.5 1365.2,644 1366.6,665.5 1367.9,654.2 1369.3,624.8 1370.6,589.8 1372,572.3 1373.4,583.1 1374.7,595.2 1376.1,627.7 1377.4,640.6 1378.8,651.2 1380.1,665 1381.5,679.8 1382.8,692.5 1384.2,680.7 1385.5,648.8 1386.9,614.3 1388.3,589.4 1389.6,567.8 1391,557.3 1392.3,561.4 1393.7,566.5 1395,580.1 1396.4,593.6 1397.7,581.5 1399.1,562.6 1400.4,544.9 1401.8,528.6 1403.2,516.1 1404.5,527 1405.9,537.8 1407.2,555.3 1408.6,571.6 1409.9,586.5 1411.3,603.6 1412.6,625.5 1414,655.8 1415.3,678.9 1416.7,691.1 1418.1,701.2 1419.4,718 1420.8,741.1 1422.1,761.6 1423.5,771.8 1424.8,781.7 1426.2,791.2 1427.5,800.6 1428.9,808.5 1430.2,816.4 1431.6,820.8 1433,812.7 1434.3,804.5 1435.7,789.1 1437,772.9 1438.4,750.4 1439.7,732.8 1441.1,708.8 1442.4,669.4 1443.8,645 1445.1,638.7 1446.5,633.3 1447.8,627.9 1449.2,620.7 1450.6,611.2 1451.9,601.4 1453.3,589.2 1454.6,577 1456,570.6 1457.3,565.7 1458.7,560.8 1460,556 1461.4,551.1 1462.7,546.2 1464.1,544.8 1465.5,543.4 1466.8,542.1 1468.2,540.7 1469.5,539.4 1470.9,539.7 1472.2,548.5 1473.6,557.3 1474.9,577 1476.3,597.8 1477.6,610.6 1479,616.4 1480.4,622.3 1481.7,628.3 1483.1,637.5 1484.4,646.8 1485.8,628.6 1487.1,613.9 1488.5,611.2 1489.8,608.5 1491.2,605.6 1492.5,600.2 1493.9,594.8 1495.3,589.3 1496.6,575.4 1498,555 1499.3,541.2 1500.7,546.6 1502,552 1503.4,557.4 1504.7,557.7 1506.1,556.3 1507.4,555 1508.8,553.6 1510.2,562.3 1511.5,566.4 1512.9,570.4 1514.2,578.8 1515.6,588.3 1516.9,603.5 1518.3,651.9 1519.6,662.4 1521,722.5 1522.3,742 1523.7,757.7 1525.1,774.3 1526.4,796 1527.8,828.2 1529.1,855.7 1530.5,872.8 1531.8,859.3 1533.2,850.3 1534.5,842.2 1535.9,831.3 1537.2,817.7 1538.6,790.7 1540,746.1 1541.3,719 1542.7,666.3 1544,664.5 1545.4,602.7 1546.7,564.3 1548.1,515 1549.4,487.9 1550.8,469.2 1552.1,463.1 1553.5,458.4 1554.9,453.7 1556.2,448.9 1557.6,447.8 1558.9,457.2 1560.3,466.7 1561.6,495.1 1563,533.2 1564.3,575.5 1565.7,630.6 1567,683.8 1568.4,707.6 1569.8,722 1571.1,729.7 1572.5,733.4 1573.8,747.3 1575.2,782.4 1576.5,829.6 1577.9,854.8 1579.2,875 1580.6,879.2 1581.9,869.8 1583.3,863.3 1584.7,858.2 1586,842.5 1587.4,824.8 1588.7,810.3 1590.1,796.3 1591.4,782 1592.8,762.5 1594.1,743.5 1595.5,731.9 1596.8,721 1598.2,708.4 1599.6,686.8 1600.9,677.3 1602.3,667.3 1603.6,650.7 1605,646.9 1606.3,632.2 1607.7,618.1 1609,611.3 1610.4,608.3 1611.7,619.9 1613.1,634.2 1614.5,662.3 1615.8,670.4 1617.2,677 1618.5,668.9 1619.9,660.8 1621.2,682.8 1622.6,721.4 1623.9,752.4 1625.3,768 1626.6,782.5 1628,789.3 1629.4,791.7 1630.7,782.1 1632.1,788.8 1633.4,805.1 1634.8,818 1636.1,823.4 1637.5,828.8 1638.8,834.2 1640.2,831 1641.5,825.9 1642.9,820.4 1644.3,801.2 1645.6,771.5 1647,746.8 1648.3,730.1 1649.7,721.4 1651,716.2 1652.4,712.6 1653.7,709 1655.1,705.7 1656.4,703.9 1657.8,702.1 1659.2,700.3 1660.5,691.1 1661.9,678.9 1663.2,663.2 1664.6,644.1 1665.9,627.4 1667.3,610.7 1668.6,598 1670,585.8 1671.3,580 1672.7,578.6 1674.1,575.9 1675.4,569.1 1676.8,562.3 1678.1,526.5 1679.5,476 1680.8,421.9 1682.2,373.7 1683.5,348 1684.9,359.8 1686.2,380.3 1687.6,403.8 1689,417.5 1690.3,422.4 1691.7,436.7 1693,473.8 1694.4,507.7 1695.7,544.8 1697.1,586.2 1698.4,611.2 1699.8,650.9 1701.1,722 1702.5,756.8 1703.9,792.8 1705.2,830.2 1706.6,868.9 1707.9,893 1709.3,910.9 1710.6,914.3 1712,906.2 1713.3,892.5 1714.7,857.1 1716,816.5 1717.4,783 1718.8,759.2 1720.1,747.4 1721.5,742.5 1722.8,737.5 1724.2,730.9 1725.5,702.5 1726.9,638.8 1728.2,633.9 1729.6,600.2 1730.9,583.4 1732.3,589.7 1733.6,596 1735,602.4 1736.4,600.2 1737.7,597.5 1739.1,594.8 1740.4,592.1 1741.8,589.4 1743.1,585.4 1744.5,581.7 1745.8,579.8 1747.2,577.9 1748.5,576.1 1749.9,574.2 1751.3,573.1 1752.6,585.4 1754,602.6 1755.3,617.1 1756.7,653.4 1758,665.5 1759.4,674.2 1760.7,649.7 1762.1,665.4 1763.4,648.9 1764.8,632.4 1766.2,621.1 1767.5,610.8 1768.9,609.9 1770.2,618.2 1771.6,659.4 1772.9,673.5 1774.3,659.2 1775.6,629.4 1777,595.8 1778.3,576.3 1779.7,579.5 1781.1,589.9 1782.4,600.3 1783.8,608.4 1785.1,613.9 1786.5,619.4 1787.8,621.7 1789.2,651.3 1790.5,685.9 1791.9,715.6 1793.2,731.8 1794.6,744.3 1796,753.3 1797.3,761.5 1798.7,765.7 1800,765.3 1801.4,764.8 1802.7,764.4 1804.1,781.3 1805.4,804.4 1806.8,830.5 1808.1,852.4 1809.5,855 1810.9,825 1812.2,778.9 1813.6,731.5 1814.9,692 1816.3,673.5 1817.6,664.6 1819,661.2 1820.3,658.9 1821.7,657 1823,639.9 1824.4,614.5 1825.8,581.5 1827.1,547.8 1828.5,529.6 1829.8,524.6 1831.2,534.7 1832.5,560.9 1833.9,584.3 1835.2,597.1 1836.6,618.8 1837.9,612.6 1839.3,597.7 1840.7,584 1842,531.7 1843.4,513.7 1844.7,513 1846.1,529.5 1847.4,553.5 1848.8,571.7 1850.1,550.1 1851.5,558.9 1852.8,537.6" fill="none" stroke="#2ca02c" stroke-width="1.4" stroke-linejoin="round"/>
<path d="M499.7 660.5h0M501.1 660.5h0M502.4 660.5h0M503.8 660.5h0M505.1 664h0M506.5 668.9h0M507.8 673.9h0M509.2 679.9h0M510.5 689.9h0M511.9 699.8h0M513.2 709.7h0M514.6 716h0M516 720.8h0M517.3 725.7h0M518.7 730.6h0M520 735.5h0M521.4 740.3h0M522.7 729.5h0M524.1 717.3h0M525.4 698.7h0M526.8 675.7h0M528.1 657.1h0M529.5 650.3h0M530.9 643.5h0M532.2 640.6h0M533.6 637.4h0M534.9 634.1h0M536.3 630.9h0M537.6 627.6h0M539 621.6h0M540.3 597.9h0M541.7 574.2h0M543 578.2h0M544.4 588.5h0M545.8 598.9h0M547.1 609.5h0M548.5 620.3h0M549.8 631.1h0M551.2 616.2h0M552.5 601.3h0M553.9 574.5h0M555.2 542h0M556.6 510.9h0M557.9 482.4h0M559.3 455.7h0M560.7 486.2h0M562 516.7h0M563.4 547.7h0M564.7 582.4h0M566.1 602.1h0M567.4 592.2h0M568.8 582.3h0M570.1 572.4h0M571.5 566.5h0M572.8 561h0M574.2 555.6h0M575.6 557.6h0M576.9 570.2h0M578.3 582.8h0M579.6 595.5h0M581 607.7h0M582.3 619.9h0M583.7 604.6h0M585 570.7h0M586.4 543h0M587.7 531.5h0M589.1 519.9h0M590.5 525.8h0M591.8 532.5h0M593.2 539.3h0M594.5 553h0M595.9 574.7h0M597.2 593.5h0M598.6 594.9h0M599.9 596.2h0M601.3 584.4h0M602.6 569.5h0M604 554.6h0M605.4 549.5h0M606.7 564.8h0M608.1 580h0M609.4 595.2h0M610.8 610.5h0M612.1 606.8h0M613.5 594.1h0M614.8 581.5h0M616.2 574.3h0M617.5 589.7h0M618.9 605.2h0M620.3 620.6h0M621.6 636.1h0M623 653.8h0M624.3 669.8h0M625.7 682h0M627 693h0M628.4 684h0M629.7 674.9h0M631.1 665.9h0M632.4 668.2h0M633.8 679.1h0M635.1 692.6h0M636.5 714.3h0M637.9 735.9h0M639.2 748.8h0M640.6 761h0M641.9 767h0M643.3 768.8h0M644.6 770.6h0M646 773.1h0M647.3 781.3h0M648.7 789.4h0M650 797.5h0M651.4 805.6h0M652.8 813.8h0M654.1 824.4h0M655.5 840.6h0M656.8 856.9h0M658.2 845.3h0M659.5 833.1h0M660.9 816.5h0M662.2 796.2h0M663.6 775h0M664.9 754.2h0M666.3 731.2h0M667.7 712.2h0M669 688.7h0M670.4 674.3h0M671.7 663.2h0M673.1 639.2h0M674.4 623.7h0M675.8 555.2h0M677.1 544.4h0M678.5 533.5h0M679.8 523.7h0M681.2 514.2h0M682.6 504.7h0M683.9 495.2h0M685.3 487h0M686.6 499.2h0M688 511.4h0M689.3 519.6h0M690.7 526.4h0M692 534.8h0M693.4 545.7h0M694.7 556.5h0M696.1 567.3h0M697.5 578.2h0M698.8 573.5h0M700.2 564h0M701.5 554.5h0M702.9 545.1h0M704.2 537.5h0M705.6 545h0M706.9 552.4h0M708.3 559.9h0M709.6 567.3h0M711 589h0M712.4 617.3h0M713.7 623.6h0M715.1 629.9h0M716.4 636.3h0M717.8 650.2h0M719.1 654.9h0M720.5 659.7h0M721.8 664.4h0M723.2 671.1h0M724.5 687.3h0M725.9 699.5h0M727.3 696.2h0M728.6 690.1h0M730 674.5h0M731.3 654h0M732.7 642.1h0M734 636.9h0M735.4 631.8h0M736.7 626.1h0M738.1 620.3h0M739.4 614.6h0M740.8 608.8h0M742.2 597.2h0M743.5 565.4h0M744.9 533.6h0M746.2 517h0M747.6 525.4h0M748.9 542.1h0M750.3 558.8h0M751.6 568.3h0M753 556.5h0M754.3 544.6h0M755.7 532.8h0M757.1 520.9h0M758.4 530.5h0M759.8 554.2h0M761.1 581.1h0M762.5 641h0M763.8 649.6h0M765.2 683.6h0M766.5 728.4h0M767.9 763.1h0M769.2 790.4h0M770.6 807.3h0M772 822.1h0M773.3 836.5h0M774.7 846.7h0M776 856.9h0M777.4 858.6h0M778.7 855.9h0M780.1 850.7h0M781.4 840.5h0M782.8 830.3h0M784.1 811.3h0M785.5 787.8h0M786.9 760.6h0M788.2 732.9h0M789.6 710.7h0M790.9 697.1h0M792.3 695.1h0M793.6 704.6h0M795 708.8h0M796.3 688.5h0M797.7 670.3h0M799 653.9h0M800.4 638.8h0M801.8 639.5h0M803.1 632.2h0M804.5 624.9h0M805.8 617.5h0M807.2 610.2h0M808.5 599.2h0M809.9 582.9h0M811.2 566.7h0M812.6 550.4h0M813.9 534.2h0M815.3 523.6h0M816.7 514.8h0M818 518.3h0M819.4 537.3h0M820.7 556.5h0M822.1 577.5h0M823.4 598.5h0M824.8 609.2h0M826.1 617.2h0M827.5 625.3h0M828.8 633.3h0M830.2 641.4h0M831.6 649.4h0M832.9 657.5h0M834.3 678.9h0M835.6 666.1h0M837 644.2h0M838.3 632.4h0M839.7 620.7h0M841 608.7h0M842.4 580.3h0M843.7 551.9h0M845.1 530.9h0M846.5 513.3h0M847.8 497.6h0M849.2 485.4h0M850.5 474h0M851.9 480.7h0M853.2 487.5h0M854.6 476.9h0M855.9 459.3h0M857.3 433.7h0M858.6 403.2h0M860 397.8h0M861.4 392.4h0M862.7 387h0M864.1 381.5h0M865.4 376.1h0M866.8 380.3h0M868.1 397.9h0M869.5 415.7h0M870.8 434.6h0M872.2 453.6h0M873.5 440.2h0M874.9 417.2h0M876.3 400.5h0M877.6 391.7h0M879 386.4h0M880.3 406h0M881.7 425.6h0M883 445.5h0M884.4 465.3h0M885.7 485.2h0M887.1 500.1h0M888.4 504.2h0M889.8 508.3h0M891.2 477.6h0M892.5 446.5h0M893.9 421.8h0M895.2 401.7h0M896.6 411.8h0M897.9 423.3h0M899.3 440.9h0M900.6 458.5h0M902 451.9h0M903.3 441h0M904.7 446.6h0M906 467h0M907.4 485.9h0M908.8 499.4h0M910.1 513h0M911.5 531.3h0M912.8 553.2h0M914.2 576.2h0M915.5 585.9h0M916.9 575.1h0M918.2 564.3h0M919.6 553.4h0M920.9 561.4h0M922.3 571.3h0M923.7 581.3h0M925 580.8h0M926.4 565.9h0M927.7 551h0M929.1 536.1h0M930.4 521.2h0M931.8 513.1h0M933.1 507h0M934.5 510.6h0M935.8 526.2h0M937.2 542.8h0M938.6 567.2h0M939.9 594.2h0M941.3 616.9h0M942.6 647.7h0M944 674.1h0M945.3 686.3h0M946.7 696.8h0M948 697.4h0M949.4 698.1h0M950.7 698.8h0M952.1 699.5h0M953.5 696.2h0M954.8 689h0M956.2 681.7h0M957.5 674.8h0M958.9 685.6h0M960.2 696.5h0M961.6 731h0M962.9 766.9h0M964.3 782.7h0M965.6 790.2h0M967 793.6h0M968.4 797h0M969.7 801.6h0M971.1 806.3h0M972.4 803.5h0M973.8 794.7h0M975.1 786.9h0M976.5 782.4h0M977.8 777.9h0M979.2 773.4h0M980.5 763.1h0M981.9 750.9h0M983.3 730.7h0M984.6 700.3h0M986 672.4h0M987.3 649.4h0M988.7 642h0M990 621.5h0M991.4 601.9h0M992.7 584.9h0M994.1 595.2h0M995.4 614.4h0M996.8 633.5h0M998.2 682.1h0M999.5 666.6h0M1000.9 635.1h0M1002.2 612.1h0M1003.6 598.5h0M1004.9 587.4h0M1006.3 590.2h0M1007.6 592.9h0M1009 595.6h0M1010.3 598.3h0M1011.7 601h0M1013.1 603.5h0M1014.4 605.5h0M1015.8 607.5h0M1017.1 609.6h0M1018.5 611.6h0M1019.8 610h0M1021.2 606.7h0M1022.5 603.5h0M1023.9 600.2h0M1025.2 597h0M1026.6 593.7h0M1028 596.5h0M1029.3 600.1h0M1030.7 603.7h0M1032 602.3h0M1033.4 593.3h0M1034.7 584.3h0M1036.1 575.3h0M1037.4 554.7h0M1038.8 532.8h0M1040.1 510.8h0M1041.5 519.2h0M1042.9 531.4h0M1044.2 561.8h0M1045.6 606.3h0M1046.9 634h0M1048.3 652.6h0M1049.6 650.9h0M1051 646.5h0M1052.3 652.6h0M1053.7 658.8h0M1055 665h0M1056.4 691.3h0M1057.8 718.4h0M1059.1 742h0M1060.5 763.7h0M1061.8 781.1h0M1063.2 789.2h0M1064.5 797.3h0M1065.9 805.5h0M1067.2 792.1h0M1068.6 774.3h0M1069.9 760.1h0M1071.3 746h0M1072.7 735.3h0M1074 739.8h0M1075.4 744.3h0M1076.7 748.8h0M1078.1 743.3h0M1079.4 733.3h0M1080.8 723.4h0M1082.1 711h0M1083.5 689.4h0M1084.8 667.7h0M1086.2 625.8h0M1087.6 581.4h0M1088.9 622.2h0M1090.3 606.6h0M1091.6 624.3h0M1093 643h0M1094.3 658.1h0M1095.7 643.6h0M1097 616h0M1098.4 600.4h0M1099.7 596.3h0M1101.1 592.3h0M1102.5 588.2h0M1103.8 584.1h0M1105.2 595.3h0M1106.5 607.5h0M1107.9 598.9h0M1109.2 577.2h0M1110.6 561.3h0M1111.9 559.5h0M1113.3 557.7h0M1114.6 555.9h0M1116 561.4h0M1117.4 568.6h0M1118.7 575.8h0M1120.1 582.5h0M1121.4 587.9h0M1122.8 593.3h0M1124.1 598.7h0M1125.5 617.7h0M1126.8 651.1h0M1128.2 669.1h0M1129.5 691.3h0M1130.9 716.1h0M1132.3 736.6h0M1133.6 762.3h0M1135 798.3h0M1136.3 813.8h0M1137.7 829.7h0M1139 846h0M1140.4 862.5h0M1141.7 879.5h0M1143.1 884.9h0M1144.4 890.4h0M1145.8 890.9h0M1147.2 889.5h0M1148.5 895.5h0M1149.9 912.4h0M1151.2 929.1h0M1152.6 942.6h0M1153.9 940.7h0M1155.3 937.3h0M1156.6 931.1h0M1158 923h0M1159.3 913.8h0M1160.7 900.1h0M1162.1 873h0M1163.4 834.4h0M1164.8 796.2h0M1166.1 774.1h0M1167.5 778.3h0M1168.8 802h0M1170.2 822.1h0M1171.5 818h0M1172.9 813.9h0M1174.2 798.9h0M1175.6 781.3h0M1177 757.8h0M1178.3 732.4h0M1179.7 716.1h0M1181 699.9h0M1182.4 672.8h0M1183.7 690.9h0M1185.1 718h0M1186.4 746.5h0M1187.8 760.7h0M1189.1 745.8h0M1190.5 730.8h0M1191.8 710.5h0M1193.2 690.2h0M1194.6 652.2h0M1195.9 623.1h0M1197.3 608.2h0M1198.6 597.3h0M1200 601.4h0M1201.3 605.5h0M1202.7 599.3h0M1204 591.9h0M1205.4 584.4h0M1206.7 577h0M1208.1 570.8h0M1209.5 568.8h0M1210.8 566.7h0M1212.2 564.7h0M1213.5 562.7h0M1214.9 569.9h0M1216.2 583.4h0M1217.6 600.6h0M1218.9 626.8h0M1220.3 645.3h0M1221.6 660.5h0M1223 673.1h0M1224.4 697.9h0M1225.7 719.3h0M1227.1 727.4h0M1228.4 728.7h0M1229.8 685.6h0M1231.1 642.5h0M1232.5 656.3h0M1233.8 605.3h0M1235.2 565.8h0M1236.5 553.6h0M1237.9 567.2h0M1239.3 580.7h0M1240.6 563.2h0M1242 545.6h0M1243.3 536.8h0M1244.7 532.3h0M1246 527.7h0M1247.4 522.3h0M1248.7 512.9h0M1250.1 503.6h0M1251.4 498h0M1252.8 511.5h0M1254.2 562.8h0M1255.5 643.9h0M1256.9 702.1h0M1258.2 713h0M1259.6 723.8h0M1260.9 730.6h0M1262.3 737h0M1263.6 743.3h0M1265 749.2h0M1266.3 754.6h0M1267.7 760.7h0M1269.1 774.3h0M1270.4 795.3h0M1271.8 812.1h0M1273.1 827.3h0M1274.5 811.5h0M1275.8 789.4h0M1277.2 760h0M1278.5 734.3h0M1279.9 713.7h0M1281.2 696.5h0M1282.6 673.5h0M1284 649.6h0M1285.3 623.9h0M1286.7 610.4h0M1288 596.8h0M1289.4 585.9h0M1290.7 575.1h0M1292.1 580.1h0M1293.4 593.6h0M1294.8 610.3h0M1296.1 631.9h0M1297.5 647.1h0M1298.9 655h0M1300.2 661.7h0M1301.6 668.3h0M1302.9 675h0M1304.3 681.7h0M1305.6 698.5h0M1307 735.3h0M1308.3 767.9h0M1309.7 795.7h0M1311 810.9h0M1312.4 821h0M1313.8 822.9h0M1315.1 811.4h0M1316.5 801.5h0M1317.8 818.4h0M1319.2 835.4h0M1320.5 851.9h0M1321.9 865.3h0M1323.2 851.7h0M1324.6 838.2h0M1325.9 824.4h0M1327.3 808.1h0M1328.7 800.6h0M1330 793.8h0M1331.4 777.4h0M1332.7 744.8h0M1334.1 711.7h0M1335.4 695.2h0M1336.8 681.6h0M1338.1 661.9h0M1339.5 641.8h0M1340.8 647.5h0M1342.2 652.7h0M1343.6 639.4h0M1344.9 630.5h0M1346.3 649.3h0M1347.6 668h0M1349 682.5h0M1350.3 666.2h0M1351.7 634h0M1353 620.9h0M1354.4 641.7h0M1355.7 633.2h0M1357.1 624.6h0M1358.5 616h0M1359.8 607.4h0M1361.2 598.9h0M1362.5 600.9h0M1363.9 622.5h0M1365.2 644h0M1366.6 665.5h0M1367.9 654.2h0M1369.3 624.8h0M1370.6 589.8h0M1372 572.3h0M1373.4 583.1h0M1374.7 595.2h0M1376.1 627.7h0M1377.4 640.6h0M1378.8 651.2h0M1380.1 665h0M1381.5 679.8h0M1382.8 692.5h0M1384.2 680.7h0M1385.5 648.8h0M1386.9 614.3h0M1388.3 589.4h0M1389.6 567.8h0M1391 557.3h0M1392.3 561.4h0M1393.7 566.5h0M1395 580.1h0M1396.4 593.6h0M1397.7 581.5h0M1399.1 562.6h0M1400.4 544.9h0M1401.8 528.6h0M1403.2 516.1h0M1404.5 527h0M1405.9 537.8h0M1407.2 555.3h0M1408.6 571.6h0M1409.9 586.5h0M1411.3 603.6h0M1412.6 625.5h0M1414 655.8h0M1415.3 678.9h0M1416.7 691.1h0M1418.1 701.2h0M1419.4 718h0M1420.8 741.1h0M1422.1 761.6h0M1423.5 771.8h0M1424.8 781.7h0M1426.2 791.2h0M1427.5 800.6h0M1428.9 808.5h0M1430.2 816.4h0M1431.6 820.8h0M1433 812.7h0M1434.3 804.5h0M1435.7 789.1h0M1437 772.9h0M1438.4 750.4h0M1439.7 732.8h0M1441.1 708.8h0M1442.4 669.4h0M1443.8 645h0M1445.1 638.7h0M1446.5 633.3h0M1447.8 627.9h0M1449.2 620.7h0M1450.6 611.2h0M1451.9 601.4h0M1453.3 589.2h0M1454.6 577h0M1456 570.6h0M1457.3 565.7h0M1458.7 560.8h0M1460 556h0M1461.4 551.1h0M1462.7 546.2h0M1464.1 544.8h0M1465.5 543.4h0M1466.8 542.1h0M1468.2 540.7h0M1469.5 539.4h0M1470.9 539.7h0M1472.2 548.5h0M1473.6 557.3h0M1474.9 577h0M1476.3 597.8h0M1477.6 610.6h0M1479 616.4h0M1480.4 622.3h0M1481.7 628.3h0M1483.1 637.5h0M1484.4 646.8h0M1485.8 628.6h0M1487.1 613.9h0M1488.5 611.2h0M1489.8 608.5h0M1491.2 605.6h0M1492.5 600.2h0M1493.9 594.8h0M1495.3 589.3h0M1496.6 575.4h0M1498 555h0M1499.3 541.2h0M1500.7 546.6h0M1502 552h0M1503.4 557.4h0M1504.7 557.7h0M1506.1 556.3h0M1507.4 555h0M1508.8 553.6h0M1510.2 562.3h0M1511.5 566.4h0M1512.9 570.4h0M1514.2 578.8h0M1515.6 588.3h0M1516.9 603.5h0M1518.3 651.9h0M1519.6 662.4h0M1521 722.5h0M1522.3 742h0M1523.7 757.7h0M1525.1 774.3h0M1526.4 796h0M1527.8 828.2h0M1529.1 855.7h0M1530.5 872.8h0M1531.8 859.3h0M1533.2 850.3h0M1534.5 842.2h0M1535.9 831.3h0M1537.2 817.7h0M1538.6 790.7h0M1540 746.1h0M1541.3 719h0M1542.7 666.3h0M1544 664.5h0M1545.4 602.7h0M1546.7 564.3h0M1548.1 515h0M1549.4 487.9h0M1550.8 469.2h0M1552.1 463.1h0M1553.5 458.4h0M1554.9 453.7h0M1556.2 448.9h0M1557.6 447.8h0M1558.9 457.2h0M1560.3 466.7h0M1561.6 495.1h0M1563 533.2h0M1564.3 575.5h0M1565.7 630.6h0M1567 683.8h0M1568.4 707.6h0M1569.8 722h0M1571.1 729.7h0M1572.5 733.4h0M1573.8 747.3h0M1575.2 782.4h0M1576.5 829.6h0M1577.9 854.8h0M1579.2 875h0M1580.6 879.2h0M1581.9 869.8h0M1583.3 863.3h0M1584.7 858.2h0M1586 842.5h0M1587.4 824.8h0M1588.7 810.3h0M1590.1 796.3h0M1591.4 782h0M1592.8 762.5h0M1594.1 743.5h0M1595.5 731.9h0M1596.8 721h0M1598.2 708.4h0M1599.6 686.8h0M1600.9 677.3h0M1602.3 667.3h0M1603.6 650.7h0M1605 646.9h0M1606.3 632.2h0M1607.7 618.1h0M1609 611.3h0M1610.4 608.3h0M1611.7 619.9h0M1613.1 634.2h0M1614.5 662.3h0M1615.8 670.4h0M1617.2 677h0M1618.5 668.9h0M1619.9 660.8h0M1621.2 682.8h0M1622.6 721.4h0M1623.9 752.4h0M1625.3 768h0M1626.6 782.5h0M1628 789.3h0M1629.4 791.7h0M1630.7 782.1h0M1632.1 788.8h0M1633.4 805.1h0M1634.8 818h0M1636.1 823.4h0M1637.5 828.8h0M1638.8 834.2h0M1640.2 831h0M1641.5 825.9h0M1642.9 820.4h0M1644.3 801.2h0M1645.6 771.5h0M1647 746.8h0M1648.3 730.1h0M1649.7 721.4h0M1651 716.2h0M1652.4 712.6h0M1653.7 709h0M1655.1 705.7h0M1656.4 703.9h0M1657.8 702.1h0M1659.2 700.3h0M1660.5 691.1h0M1661.9 678.9h0M1663.2 663.2h0M1664.6 644.1h0M1665.9 627.4h0M1667.3 610.7h0M1668.6 598h0M1670 585.8h0M1671.3 580h0M1672.7 578.6h0M1674.1 575.9h0M1675.4 569.1h0M1676.8 562.3h0M1678.1 526.5h0M1679.5 476h0M1680.8 421.9h0M1682.2 373.7h0M1683.5 348h0M1684.9 359.8h0M1686.2 380.3h0M1687.6 403.8h0M1689 417.5h0M1690.3 422.4h0M1691.7 436.7h0M1693 473.8h0M1694.4 507.7h0M1695.7 544.8h0M1697.1 586.2h0M1698.4 611.2h0M1699.8 650.9h0M1701.1 722h0M1702.5 756.8h0M1703.9 792.8h0M1705.2 830.2h0M1706.6 868.9h0M1707.9 893h0M1709.3 910.9h0M1710.6 914.3h0M1712 906.2h0M1713.3 892.5h0M1714.7 857.1h0M1716 816.5h0M1717.4 783h0M1718.8 759.2h0M1720.1 747.4h0M1721.5 742.5h0M1722.8 737.5h0M1724.2 730.9h0M1725.5 702.5h0M1726.9 638.8h0M1728.2 633.9h0M1729.6 600.2h0M1730.9 583.4h0M1732.3 589.7h0M1733.6 596h0M1735 602.4h0M1736.4 600.2h0M1737.7 597.5h0M1739.1 594.8h0M1740.4 592.1h0M1741.8 589.4h0M1743.1 585.4h0M1744.5 581.7h0M1745.8 579.8h0M1747.2 577.9h0M1748.5 576.1h0M1749.9 574.2h0M1751.3 573.1h0M1752.6 585.4h0M1754 602.6h0M1755.3 617.1h0M1756.7 653.4h0M1758 665.5h0M1759.4 674.2h0M1760.7 649.7h0M1762.1 665.4h0M1763.4 648.9h0M1764.8 632.4h0M1766.2 621.1h0M1767.5 610.8h0M1768.9 609.9h0M1770.2 618.2h0M1771.6 659.4h0M1772.9 673.5h0M1774.3 659.2h0M1775.6 629.4h0M1777 595.8h0M1778.3 576.3h0M1779.7 579.5h0M1781.1 589.9h0M1782.4 600.3h0M1783.8 608.4h0M1785.1 613.9h0M1786.5 619.4h0M1787.8 621.7h0M1789.2 651.3h0M1790.5 685.9h0M1791.9 715.6h0M1793.2 731.8h0M1794.6 744.3h0M1796 753.3h0M1797.3 761.5h0M1798.7 765.7h0M1800 765.3h0M1801.4 764.8h0M1802.7 764.4h0M1804.1 781.3h0M1805.4 804.4h0M1806.8 830.5h0M1808.1 852.4h0M1809.5 855h0M1810.9 825h0M1812.2 778.9h0M1813.6 731.5h0M1814.9 692h0M1816.3 673.5h0M1817.6 664.6h0M1819 661.2h0M1820.3 658.9h0M1821.7 657h0M1823 639.9h0M1824.4 614.5h0M1825.8 581.5h0M1827.1 547.8h0M1828.5 529.6h0M1829.8 524.6h0M1831.2 534.7h0M1832.5 560.9h0M1833.9 584.3h0M1835.2 597.1h0M1836.6 618.8h0M1837.9 612.6h0M1839.3 597.7h0M1840.7 584h0M1842 531.7h0M1843.4 513.7h0M1844.7 513h0M1846.1 529.5h0M1847.4 553.5h0M1848.8 571.7h0M1850.1 550.1h0M1851.5 558.9h0M1852.8 537.6h0" stroke="#2ca02c" stroke-width="6" stroke-linecap="round" fill="none"/>
</g>
<rect x="464.0" y="300.25" width="1424.75" height="688.5" fill="none" stroke="#1e1e1e" stroke-width="1.5"/>
<path d="M458.25 980.5H463.25M460.25 968.5H463.25M460.25 955.5H463.25M460.25 942.5H463.25M460.25 929.5H463.25M458.25 917.5H463.25M460.25 904.5H463.25M460.25 891.5H463.25M460.25 879.5H463.25M460.25 866.5H463.25M458.25 853.5H463.25M460.25 840.5H463.25M460.25 828.5H463.25M460.25 815.5H463.25M460.25 802.5H463.25M458.25 789.5H463.25M460.25 777.5H463.25M460.25 764.5H463.25M460.25 751.5H463.25M460.25 739.5H463.25M458.25 726.5H463.25M460.25 713.5H463.25M460.25 700.5H463.25M460.25 688.5H463.25M460.25 675.5H463.25M458.25 662.5H463.25M460.25 649.5H463.25M460.25 637.5H463.25M460.25 624.5H463.25M460.25 611.5H463.25M458.25 599.5H463.25M460.25 586.5H463.25M460.25 573.5H463.25M460.25 560.5H463.25M460.25 548.5H463.25M458.25 535.5H463.25M460.25 522.5H463.25M460.25 510.5H463.25M460.25 497.5H463.25M460.25 484.5H463.25M458.25 471.5H463.25M460.25 459.5H463.25M460.25 446.5H463.25M460.25 433.5H463.25M460.25 420.5H463.25M458.25 408.5H463.25M460.25 395.5H463.25M460.25 382.5H463.25M460.25 370.5H463.25M460.25 357.5H463.25M458.25 344.5H463.25M460.25 331.5H463.25M460.25 319.5H463.25M460.25 306.5H463.25M473.5 989.5V992.5M486.5 989.5V992.5M500.5 989.5V995.5M513.5 989.5V992.5M527.5 989.5V992.5M540.5 989.5V992.5M554.5 989.5V992.5M567.5 989.5V995.5M581.5 989.5V992.5M595.5 989.5V992.5M608.5 989.5V992.5M622.5 989.5V992.5M635.5 989.5V995.5M649.5 989.5V992.5M662.5 989.5V992.5M676.5 989.5V992.5M689.5 989.5V992.5M703.5 989.5V995.5M716.5 989.5V992.5M730.5 989.5V992.5M744.5 989.5V992.5M757.5 989.5V992.5M771.5 989.5V995.5M784.5 989.5V992.5M798.5 989.5V992.5M811.5 989.5V992.5M825.5 989.5V992.5M838.5 989.5V995.5M852.5 989.5V992.5M865.5 989.5V992.5M879.5 989.5V992.5M893.5 989.5V992.5M906.5 989.5V995.5M920.5 989.5V992.5M933.5 989.5V992.5M947.5 989.5V992.5M960.5 989.5V992.5M974.5 989.5V995.5M987.5 989.5V992.5M1001.5 989.5V992.5M1014.5 989.5V992.5M1028.5 989.5V992.5M1042.5 989.5V995.5M1055.5 989.5V992.5M1069.5 989.5V992.5M1082.5 989.5V992.5M1096.5 989.5V992.5M1109.5 989.5V995.5M1123.5 989.5V992.5M1136.5 989.5V992.5M1150.5 989.5V992.5M1163.5 989.5V992.5M1177.5 989.5V995.5M1190.5 989.5V992.5M1204.5 989.5V992.5M1218.5 989.5V992.5M1231.5 989.5V992.5M1245.5 989.5V995.5M1258.5 989.5V992.5M1272.5 989.5V992.5M1285.5 989.5V992.5M1299.5 989.5V992.5M1312.5 989.5V995.5M1326.5 989.5V992.5M1339.5 989.5V992.5M1353.5 989.5V992.5M1367.5 989.5V992.5M1380.5 989.5V995.5M1394.5 989.5V992.5M1407.5 989.5V992.5M1421.5 989.5V992.5M1434.5 989.5V992.5M1448.5 989.5V995.5M1461.5 989.5V992.5M1475.5 989.5V992.5M1488.5 989.5V992.5M1502.5 989.5V992.5M1516.5 989.5V995.5M1529.5 989.5V992.5M1543.5 989.5V992.5M1556.5 989.5V992.5M1570.5 989.5V992.5M1583.5 989.5V995.5M1597.5 989.5V992.5M1610.5 989.5V992.5M1624.5 989.5V992.5M1637.5 989.5V992.5M1651.5 989.5V995.5M1665.5 989.5V992.5M1678.5 989.5V992.5M1692.5 989.5V992.5M1705.5 989.5V992.5M1719.5 989.5V995.5M1732.5 989.5V992.5M1746.5 989.5V992.5M1759.5 989.5V992.5M1773.5 989.5V992.5M1786.5 989.5V995.5M1800.5 989.5V992.5M1814.5 989.5V992.5M1827.5 989.5V992.5M1841.5 989.5V992.5M1854.5 989.5V995.5M1868.5 989.5V992.5M1881.5 989.5V992.5" stroke="#1e1e1e" stroke-width="1.5" fill="none"/>
<g font-family="Liberation Sans" font-size="14" fill="#2a2a2a"><text x="455" y="985.3" text-anchor="end">-12.5</text><text x="455" y="921.7" text-anchor="end">-10</text><text x="455" y="858.1" text-anchor="end">-7.5</text><text x="455" y="794.5" text-anchor="end">-5</text><text x="455" y="730.8" text-anchor="end">-2.5</text><text x="455" y="667.2" text-anchor="end">0</text><text x="455" y="603.6" text-anchor="end">2.5</text><text x="455" y="540" text-anchor="end">5</text><text x="455" y="476.3" text-anchor="end">7.5</text><text x="455" y="412.7" text-anchor="end">10</text><text x="455" y="349.1" text-anchor="end">12.5</text><text x="499.7" y="1008" text-anchor="middle">0</text><text x="567.4" y="1008" text-anchor="middle">0.05</text><text x="635.1" y="1008" text-anchor="middle">0.1</text><text x="702.9" y="1008" text-anchor="middle">0.15</text><text x="770.6" y="1008" text-anchor="middle">0.2</text><text x="838.3" y="1008" text-anchor="middle">0.25</text><text x="906.1" y="1008" text-anchor="middle">0.3</text><text x="973.8" y="1008" text-anchor="middle">0.35</text><text x="1041.5" y="1008" text-anchor="middle">0.4</text><text x="1109.2" y="1008" text-anchor="middle">0.45</text><text x="1177" y="1008" text-anchor="middle">0.5</text><text x="1244.7" y="1008" text-anchor="middle">0.55</text><text x="1312.4" y="1008" text-anchor="middle">0.6</text><text x="1380.1" y="1008" text-anchor="middle">0.65</text><text x="1447.9" y="1008" text-anchor="middle">0.7</text><text x="1515.6" y="1008" text-anchor="middle">0.75</text><text x="1583.3" y="1008" text-anchor="middle">0.8</text><text x="1651" y="1008" text-anchor="middle">0.85</text><text x="1718.8" y="1008" text-anchor="middle">0.9</text><text x="1786.5" y="1008" text-anchor="middle">0.95</text><text x="1854.2" y="1008" text-anchor="middle">1</text></g>
<text x="1131.5" y="1031.5" textLength="90" lengthAdjust="spacingAndGlyphs" font-family="Liberation Sans" font-size="19" fill="#1e1e1e">Time (sec)</text>
<text transform="translate(418 687.5) rotate(-90)" textLength="88" lengthAdjust="spacingAndGlyphs" font-family="Liberation Sans" font-size="19" fill="#1e1e1e">Amplitude</text>
<text x="876" y="291.5" textLength="598" lengthAdjust="spacingAndGlyphs" font-family="Liberation Sans" font-weight="bold" font-size="24" fill="#111">x(t), IIR filtering: y1, Convolution: y2 = h(t) * x(t)</text>
<rect x="1635.5" y="923.5" width="250.5" height="61.0" fill="#000" fill-opacity="0.12"/>
<rect x="1632.5" y="920.5" width="250.5" height="61.0" fill="#fff" stroke="#1e1e1e" stroke-width="1.5"/>
<path d="M1637 931.5H1679" stroke="#3584c6" stroke-width="1.6"/>
<path d="M1637 952.5H1679M1650 944.5h16v15h-16z" stroke="#ff7f0e" stroke-width="1.3" fill="none"/>
<path d="M1637 972.5H1679" stroke="#2ca02c" stroke-width="1.4"/><circle cx="1658" cy="972.5" r="3" fill="#2ca02c"/>
<g font-family="Liberation Sans" font-size="14" fill="#222"><text x="1686" y="936.5" textLength="27" lengthAdjust="spacingAndGlyphs">x(t)</text><text x="1686" y="957" textLength="98" lengthAdjust="spacingAndGlyphs">IIR filtering: y1</text><text x="1686" y="977" textLength="188" lengthAdjust="spacingAndGlyphs">Convolution: y2 = h(t) * x(t)</text></g>
</svg>
<!-- status -->
<div id="status" class="a"></div>
<div class="a" style="left:9px;top:1057px;font-size:15px;line-height:18px;color:#e6eaee;white-space:nowrap">C:&#8361;Users&#8361;Administrator&#8361;Documents&#8361;Malmijal-M&#8361;Samples&#8361;filter vs. convolution.mmj</div>
<div class="a" style="right:32px;top:1057px;letter-spacing:0.25px;font-size:15px;line-height:18px;color:#e6eaee;white-space:nowrap">No. of Samples: 1,000</div>
<svg class="a" style="left:1898px;top:1060px" width="20" height="18" viewBox="0 0 20 18"><g fill="#c8d0d8"><rect x="13" y="4" width="2" height="2"/><rect x="9" y="8" width="2" height="2"/><rect x="13" y="8" width="2" height="2"/><rect x="5" y="12" width="2" height="2"/><rect x="9" y="12" width="2" height="2"/><rect x="13" y="12" width="2" height="2"/></g></svg>
</body></html>
